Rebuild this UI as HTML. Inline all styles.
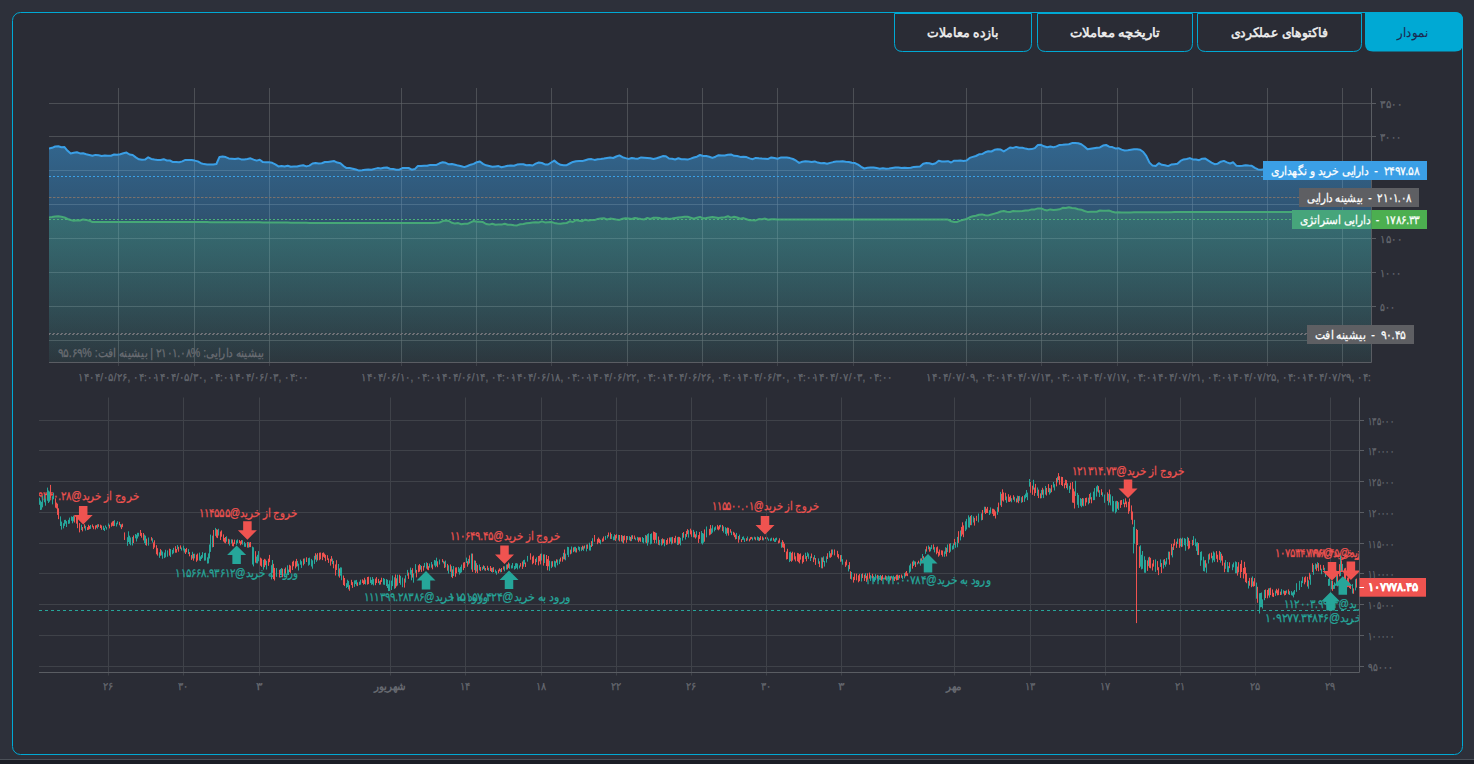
<!DOCTYPE html>
<html lang="fa"><head><meta charset="utf-8"><title>chart</title>
<style>
html,body{margin:0;padding:0;width:1474px;height:764px;overflow:hidden;background:#2d303a;}
body{position:relative;font-family:"Liberation Sans",sans-serif;}
svg{position:absolute;left:0;top:0;}
.t{position:absolute;white-space:nowrap;line-height:1;direction:rtl;unicode-bidi:plaintext;-webkit-text-stroke:0.25px currentColor;}
.clipb{position:absolute;left:39px;top:397px;width:1320px;height:275px;overflow:hidden;}
.clipt{position:absolute;left:0px;top:365px;width:1371px;height:25px;overflow:hidden;}
</style></head><body>
<svg width="1474" height="764" viewBox="0 0 1474 764">
<rect x="0" y="0" width="1474" height="764" fill="#2d303a"/>
<rect x="0" y="759" width="1474" height="1" fill="#4b5058"/>
<rect x="0" y="760" width="1474" height="4" fill="#1c1e26"/>
<rect x="12.5" y="12.5" width="1450" height="742" rx="8" ry="8" fill="#2a2c35" stroke="#00a9d4" stroke-width="1"/>
<path d="M894.5,13.5 V43.5 Q894.5,51.5 902.5,51.5 H1023.5 Q1031.5,51.5 1031.5,43.5 V13.5 Z" fill="#2a2c35" stroke="#00a9d4" stroke-width="1"/>
<path d="M1037.5,13.5 V43.5 Q1037.5,51.5 1045.5,51.5 H1184.5 Q1192.5,51.5 1192.5,43.5 V13.5 Z" fill="#2a2c35" stroke="#00a9d4" stroke-width="1"/>
<path d="M1197.5,13.5 V43.5 Q1197.5,51.5 1205.5,51.5 H1353.5 Q1361.5,51.5 1361.5,43.5 V13.5 Z" fill="#2a2c35" stroke="#00a9d4" stroke-width="1"/>
<path d="M1365,12 H1455 Q1463,12 1463,20 V43.5 Q1463,51.5 1455,51.5 H1373 Q1365,51.5 1365,43.5 V12 Z" fill="#00a9d4"/>
<defs><linearGradient id="gb" x1="0" y1="0" x2="0" y2="1" gradientUnits="objectBoundingBox"><stop offset="0" stop-color="#3a9fe6" stop-opacity="0.5"/><stop offset="1" stop-color="#3a9fe6" stop-opacity="0.03"/></linearGradient><linearGradient id="gg" x1="0" y1="0" x2="0" y2="1" gradientUnits="objectBoundingBox"><stop offset="0" stop-color="#48af78" stop-opacity="0.3"/><stop offset="1" stop-color="#48af78" stop-opacity="0.06"/></linearGradient><clipPath id="ctop"><rect x="49" y="88" width="1322.5" height="274"/></clipPath><clipPath id="cbot"><rect x="39" y="397" width="1320" height="275"/></clipPath></defs>
<line x1="49" y1="103.5" x2="1371.5" y2="103.5" stroke="#3f4249" stroke-width="1"/>
<line x1="49" y1="136.5" x2="1371.5" y2="136.5" stroke="#3f4249" stroke-width="1"/>
<line x1="49" y1="170.5" x2="1371.5" y2="170.5" stroke="#3f4249" stroke-width="1"/>
<line x1="49" y1="204.5" x2="1371.5" y2="204.5" stroke="#3f4249" stroke-width="1"/>
<line x1="49" y1="238.5" x2="1371.5" y2="238.5" stroke="#3f4249" stroke-width="1"/>
<line x1="49" y1="272.5" x2="1371.5" y2="272.5" stroke="#3f4249" stroke-width="1"/>
<line x1="49" y1="306.5" x2="1371.5" y2="306.5" stroke="#3f4249" stroke-width="1"/>
<line x1="49" y1="340.5" x2="1371.5" y2="340.5" stroke="#3f4249" stroke-width="1"/>
<line x1="118.5" y1="88" x2="118.5" y2="366.0" stroke="#3f4249" stroke-width="1"/>
<line x1="194.5" y1="88" x2="194.5" y2="366.0" stroke="#3f4249" stroke-width="1"/>
<line x1="269.5" y1="88" x2="269.5" y2="366.0" stroke="#3f4249" stroke-width="1"/>
<line x1="401.5" y1="88" x2="401.5" y2="366.0" stroke="#3f4249" stroke-width="1"/>
<line x1="476.5" y1="88" x2="476.5" y2="366.0" stroke="#3f4249" stroke-width="1"/>
<line x1="551.5" y1="88" x2="551.5" y2="366.0" stroke="#3f4249" stroke-width="1"/>
<line x1="627.5" y1="88" x2="627.5" y2="366.0" stroke="#3f4249" stroke-width="1"/>
<line x1="702.5" y1="88" x2="702.5" y2="366.0" stroke="#3f4249" stroke-width="1"/>
<line x1="777.5" y1="88" x2="777.5" y2="366.0" stroke="#3f4249" stroke-width="1"/>
<line x1="853.5" y1="88" x2="853.5" y2="366.0" stroke="#3f4249" stroke-width="1"/>
<line x1="966.5" y1="88" x2="966.5" y2="366.0" stroke="#3f4249" stroke-width="1"/>
<line x1="1041.5" y1="88" x2="1041.5" y2="366.0" stroke="#3f4249" stroke-width="1"/>
<line x1="1117.5" y1="88" x2="1117.5" y2="366.0" stroke="#3f4249" stroke-width="1"/>
<line x1="1192.5" y1="88" x2="1192.5" y2="366.0" stroke="#3f4249" stroke-width="1"/>
<line x1="1267.5" y1="88" x2="1267.5" y2="366.0" stroke="#3f4249" stroke-width="1"/>
<line x1="1342.5" y1="88" x2="1342.5" y2="366.0" stroke="#3f4249" stroke-width="1"/>
<g clip-path="url(#ctop)">
<polygon points="49.0,148.6 52.1,147.8 55.2,146.5 58.3,146.2 61.4,147.3 64.5,147.1 67.6,150.8 70.7,153.5 73.8,152.8 76.9,152.2 80.0,153.4 83.1,153.2 86.2,154.2 89.3,155.0 92.4,155.8 95.5,154.9 98.6,155.3 101.7,156.0 104.8,155.6 107.9,155.8 111.0,155.7 114.1,154.5 117.2,154.7 120.3,154.3 123.4,153.3 126.5,152.6 129.6,154.5 132.7,155.0 135.8,157.4 138.9,159.3 142.0,159.8 145.1,159.6 148.2,157.3 151.3,158.9 154.4,159.5 157.5,160.0 160.6,160.0 163.7,159.2 166.8,160.5 169.9,160.5 173.0,162.1 176.1,161.9 179.2,162.3 182.3,161.4 185.4,159.9 188.5,159.9 191.6,160.0 194.7,160.6 197.8,161.4 200.9,163.2 204.0,164.1 207.1,164.5 210.2,164.5 213.3,164.6 216.4,164.0 219.5,156.9 222.6,156.5 225.7,157.1 228.8,158.4 231.9,158.7 235.0,159.0 238.1,158.4 241.2,159.4 244.3,159.4 247.4,158.9 250.5,158.3 253.6,159.6 256.7,160.6 259.8,159.8 262.9,162.1 266.0,162.3 269.1,162.2 272.2,162.8 275.3,164.3 278.4,166.4 281.5,165.9 284.6,166.5 287.7,165.8 290.8,166.8 293.9,166.6 297.0,166.5 300.1,165.7 303.2,165.2 306.3,166.4 309.4,165.6 312.5,163.5 315.6,163.1 318.7,163.4 321.8,163.2 324.9,162.0 328.0,161.9 331.1,161.5 334.2,161.1 337.3,162.6 340.4,163.2 343.5,166.0 346.6,168.1 349.7,168.1 352.8,168.7 355.9,169.5 359.0,170.6 362.1,170.3 365.2,169.8 368.3,169.5 371.4,169.8 374.5,168.9 377.6,168.1 380.7,168.5 383.8,167.7 386.9,167.5 390.0,168.7 393.1,168.9 396.2,169.8 399.3,169.7 402.4,168.1 405.5,168.0 408.6,168.0 411.7,169.7 414.8,169.1 417.9,165.9 421.0,166.1 424.1,165.7 427.2,165.8 430.3,164.9 433.4,165.0 436.5,164.9 439.6,163.3 442.7,162.3 445.8,162.8 448.9,164.3 452.0,164.1 455.1,164.7 458.2,165.6 461.3,166.2 464.4,167.1 467.5,166.0 470.6,164.7 473.7,163.9 476.8,162.2 479.9,161.5 483.0,163.9 486.1,165.3 489.2,166.0 492.3,166.8 495.4,166.4 498.5,166.1 501.6,167.2 504.7,166.5 507.8,165.7 510.9,165.6 514.0,165.8 517.1,164.6 520.2,164.3 523.3,164.3 526.4,165.3 529.5,165.0 532.6,165.5 535.7,163.6 538.8,162.5 541.9,163.0 545.0,164.4 548.1,164.5 551.2,162.5 554.3,160.6 557.4,163.1 560.5,164.8 563.6,165.2 566.7,165.2 569.8,163.5 572.9,161.9 576.0,161.2 579.1,160.9 582.2,161.1 585.3,160.2 588.4,159.3 591.5,159.1 594.6,159.9 597.7,159.2 600.8,158.9 603.9,158.5 607.0,158.0 610.1,157.5 613.2,158.0 616.3,156.5 619.4,155.4 622.5,157.2 625.6,158.1 628.7,158.9 631.8,158.0 634.9,158.5 638.0,158.7 641.1,157.4 644.2,157.7 647.3,158.0 650.4,158.3 653.5,158.9 656.6,158.3 659.7,157.2 662.8,156.1 665.9,156.2 669.0,158.5 672.1,158.7 675.2,159.5 678.3,158.3 681.4,159.3 684.5,159.3 687.6,159.6 690.7,158.6 693.8,157.5 696.9,156.7 700.0,155.0 703.1,156.0 706.2,156.0 709.3,156.7 712.4,157.9 715.5,156.7 718.6,155.2 721.7,155.6 724.8,155.4 727.9,154.8 731.0,154.4 734.1,155.8 737.2,156.0 740.3,156.9 743.4,156.8 746.5,157.1 749.6,158.4 752.7,159.2 755.8,157.9 758.9,158.3 762.0,158.6 765.1,158.7 768.2,158.9 771.3,157.4 774.4,158.0 777.5,158.8 780.6,157.6 783.7,157.5 786.8,157.5 789.9,158.1 793.0,159.0 796.1,160.7 799.2,162.9 802.3,161.8 805.4,161.3 808.5,161.4 811.6,162.1 814.7,161.4 817.8,162.6 820.9,163.2 824.0,163.1 827.1,163.8 830.2,162.9 833.3,162.1 836.4,161.5 839.5,161.5 842.6,161.3 845.7,161.7 848.8,162.0 851.9,162.8 855.0,163.1 858.1,164.6 861.2,166.8 864.3,168.5 867.4,167.7 870.5,167.4 873.6,167.6 876.7,168.1 879.8,168.7 882.9,168.2 886.0,168.7 889.1,168.5 892.2,168.0 895.3,167.6 898.4,167.6 901.5,168.1 904.6,167.7 907.7,168.1 910.8,167.8 913.9,166.9 917.0,166.7 920.1,166.6 923.2,163.7 926.3,163.1 929.4,163.2 932.5,164.2 935.6,163.2 938.7,160.8 941.8,161.5 944.9,161.6 948.0,161.2 951.1,162.5 954.2,160.7 957.3,160.7 960.4,160.6 963.5,160.9 966.6,160.6 969.7,157.9 972.8,156.9 975.9,156.0 979.0,154.3 982.1,154.1 985.2,152.3 988.3,151.2 991.4,151.5 994.5,149.8 997.6,149.3 1000.7,149.6 1003.8,151.4 1006.9,149.5 1010.0,147.5 1013.1,147.9 1016.2,146.9 1019.3,147.8 1022.4,147.8 1025.5,148.6 1028.6,149.3 1031.7,149.1 1034.8,148.1 1037.9,145.0 1041.0,144.8 1044.1,146.3 1047.2,147.2 1050.3,146.5 1053.4,147.2 1056.5,146.4 1059.6,144.9 1062.7,144.8 1065.8,144.4 1068.9,144.3 1072.0,143.1 1075.1,143.0 1078.2,143.2 1081.3,144.3 1084.4,146.5 1087.5,149.3 1090.6,148.7 1093.7,148.2 1096.8,147.7 1099.9,147.4 1103.0,145.6 1106.1,145.0 1109.2,146.7 1112.3,147.1 1115.4,148.4 1118.5,148.2 1121.6,149.6 1124.7,150.5 1127.8,150.3 1130.9,149.8 1134.0,149.3 1137.1,149.3 1140.2,149.7 1143.3,152.0 1146.4,156.2 1149.5,162.6 1152.6,165.6 1155.7,165.9 1158.8,163.2 1161.9,164.8 1165.0,165.2 1168.1,166.1 1171.2,164.6 1174.3,164.2 1177.4,163.8 1180.5,160.9 1183.6,159.4 1186.7,159.0 1189.8,158.1 1192.9,159.4 1196.0,159.5 1199.1,160.2 1202.2,158.7 1205.3,158.6 1208.4,160.7 1211.5,162.6 1214.6,164.2 1217.7,163.7 1220.8,161.7 1223.9,160.9 1227.0,162.4 1230.1,163.5 1233.2,162.3 1236.3,165.7 1239.4,166.1 1242.5,165.8 1245.6,165.3 1248.7,165.6 1251.8,165.8 1254.9,167.8 1258.0,169.4 1261.1,169.8 1264.2,169.3 1267.3,169.3 1270.4,169.3 1273.5,169.4 1276.6,169.4 1279.7,169.4 1282.8,169.4 1285.9,169.4 1289.0,169.4 1292.1,169.5 1295.2,169.5 1298.3,169.5 1301.4,169.5 1304.5,169.5 1307.6,169.5 1310.7,169.5 1313.8,169.5 1316.9,169.5 1320.0,169.5 1323.1,169.5 1326.2,169.5 1329.3,169.5 1332.4,169.5 1335.5,169.5 1338.6,169.5 1341.7,169.5 1344.8,169.5 1347.9,169.5 1351.0,169.5 1354.1,169.5 1357.2,169.5 1360.3,169.5 1363.4,169.5 1366.5,169.5 1369.6,169.5 1371.0,169.5 1371.5,362.0 49.0,362.0" fill="url(#gb)"/>
<polygon points="49.0,217.6 52.1,217.1 55.2,216.4 58.3,216.2 61.4,216.7 64.5,217.5 67.6,219.0 70.7,220.0 73.8,220.7 76.9,220.3 80.0,220.5 83.1,219.4 86.2,219.9 89.3,220.7 92.4,222.0 95.5,222.0 98.6,222.0 101.7,222.0 104.8,222.0 107.9,222.0 111.0,222.0 114.1,222.0 117.2,222.0 120.3,222.0 123.4,222.0 126.5,222.0 129.6,222.0 132.7,222.1 135.8,222.1 138.9,222.1 142.0,222.1 145.1,222.1 148.2,222.1 151.3,222.1 154.4,222.1 157.5,222.1 160.6,222.1 163.7,222.1 166.8,222.1 169.9,222.1 173.0,222.1 176.1,222.1 179.2,222.1 182.3,222.1 185.4,222.1 188.5,222.1 191.6,222.1 194.7,222.1 197.8,222.1 200.9,222.1 204.0,222.1 207.1,222.1 210.2,222.2 213.3,222.2 216.4,222.2 219.5,222.2 222.6,222.2 225.7,222.2 228.8,222.2 231.9,222.2 235.0,222.2 238.1,222.2 241.2,222.2 244.3,222.2 247.4,222.2 250.5,222.2 253.6,222.3 256.7,222.3 259.8,222.3 262.9,222.4 266.0,222.4 269.1,222.4 272.2,222.5 275.3,222.5 278.4,222.5 281.5,222.6 284.6,222.6 287.7,222.6 290.8,222.7 293.9,222.7 297.0,222.7 300.1,222.8 303.2,222.8 306.3,222.8 309.4,222.9 312.5,222.9 315.6,223.0 318.7,223.0 321.8,223.0 324.9,223.0 328.0,223.0 331.1,223.0 334.2,223.0 337.3,223.0 340.4,223.0 343.5,223.0 346.6,223.0 349.7,223.0 352.8,223.0 355.9,223.0 359.0,223.0 362.1,223.0 365.2,223.0 368.3,223.0 371.4,223.0 374.5,223.0 377.6,223.0 380.7,223.0 383.8,223.0 386.9,223.0 390.0,223.0 393.1,223.0 396.2,223.0 399.3,223.0 402.4,223.0 405.5,223.0 408.6,223.0 411.7,223.0 414.8,223.0 417.9,223.0 421.0,223.0 424.1,223.0 427.2,223.0 430.3,223.0 433.4,223.0 436.5,222.7 439.6,222.5 442.7,221.1 445.8,220.6 448.9,221.0 452.0,222.8 455.1,223.6 458.2,223.1 461.3,224.3 464.4,223.8 467.5,223.8 470.6,222.3 473.7,221.0 476.8,221.7 479.9,221.7 483.0,222.1 486.1,224.0 489.2,224.6 492.3,223.7 495.4,224.7 498.5,224.4 501.6,224.6 504.7,223.7 507.8,224.7 510.9,224.8 514.0,225.3 517.1,225.4 520.2,224.3 523.3,223.9 526.4,223.3 529.5,222.9 532.6,222.5 535.7,222.3 538.8,222.5 541.9,221.4 545.0,222.4 548.1,222.2 551.2,222.0 554.3,222.9 557.4,223.4 560.5,223.7 563.6,223.2 566.7,223.0 569.8,221.3 572.9,222.0 576.0,220.1 579.1,220.7 582.2,221.2 585.3,219.7 588.4,220.5 591.5,220.0 594.6,220.1 597.7,218.9 600.8,218.4 603.9,218.2 607.0,219.5 610.1,218.6 613.2,219.1 616.3,219.6 619.4,219.9 622.5,218.8 625.6,218.3 628.7,218.4 631.8,219.0 634.9,217.9 638.0,218.6 641.1,219.1 644.2,219.4 647.3,217.9 650.4,219.0 653.5,217.8 656.6,217.7 659.7,218.1 662.8,219.0 665.9,218.2 669.0,219.0 672.1,218.6 675.2,218.0 678.3,217.6 681.4,217.2 684.5,216.8 687.6,216.7 690.7,217.7 693.8,218.8 696.9,217.7 700.0,216.9 703.1,218.3 706.2,218.1 709.3,217.6 712.4,217.1 715.5,217.4 718.6,218.0 721.7,217.6 724.8,217.2 727.9,216.2 731.0,217.6 734.1,216.8 737.2,217.5 740.3,218.7 743.4,218.1 746.5,219.2 749.6,220.3 752.7,220.2 755.8,220.4 758.9,219.1 762.0,219.2 765.1,218.6 768.2,219.8 771.3,219.2 774.4,219.3 777.5,219.5 780.6,219.5 783.7,219.6 786.8,219.6 789.9,219.6 793.0,219.6 796.1,219.6 799.2,219.6 802.3,219.6 805.4,219.6 808.5,219.6 811.6,219.6 814.7,219.6 817.8,219.6 820.9,219.6 824.0,219.6 827.1,219.6 830.2,219.6 833.3,219.6 836.4,219.6 839.5,219.6 842.6,219.6 845.7,219.6 848.8,219.6 851.9,219.6 855.0,219.6 858.1,219.6 861.2,219.6 864.3,219.6 867.4,219.6 870.5,219.6 873.6,219.6 876.7,219.6 879.8,219.6 882.9,219.6 886.0,219.6 889.1,219.6 892.2,219.6 895.3,219.6 898.4,219.6 901.5,219.6 904.6,219.6 907.7,219.6 910.8,219.6 913.9,219.6 917.0,219.6 920.1,219.6 923.2,219.6 926.3,219.6 929.4,219.6 932.5,219.6 935.6,219.6 938.7,219.6 941.8,219.6 944.9,219.6 948.0,219.6 951.1,221.3 954.2,222.0 957.3,221.9 960.4,220.6 963.5,219.7 966.6,219.0 969.7,217.3 972.8,216.3 975.9,215.7 979.0,214.7 982.1,214.4 985.2,215.3 988.3,215.4 991.4,214.5 994.5,213.6 997.6,212.7 1000.7,211.5 1003.8,211.1 1006.9,211.7 1010.0,212.0 1013.1,211.0 1016.2,211.2 1019.3,211.2 1022.4,210.9 1025.5,210.5 1028.6,210.4 1031.7,209.4 1034.8,209.4 1037.9,208.4 1041.0,208.4 1044.1,209.7 1047.2,210.4 1050.3,209.4 1053.4,210.1 1056.5,209.7 1059.6,209.3 1062.7,207.8 1065.8,208.0 1068.9,207.3 1072.0,208.0 1075.1,208.3 1078.2,209.3 1081.3,209.7 1084.4,211.0 1087.5,211.9 1090.6,211.8 1093.7,211.7 1096.8,211.7 1099.9,210.5 1103.0,210.7 1106.1,210.7 1109.2,210.6 1112.3,211.7 1115.4,212.5 1118.5,212.3 1121.6,212.5 1124.7,212.4 1127.8,212.4 1130.9,212.4 1134.0,212.3 1137.1,212.3 1140.2,212.3 1143.3,212.3 1146.4,212.3 1149.5,212.3 1152.6,212.2 1155.7,212.2 1158.8,212.2 1161.9,212.2 1165.0,212.2 1168.1,212.2 1171.2,212.2 1174.3,212.1 1177.4,212.1 1180.5,212.1 1183.6,212.1 1186.7,212.1 1189.8,212.1 1192.9,212.0 1196.0,212.0 1199.1,212.0 1202.2,212.0 1205.3,212.0 1208.4,212.0 1211.5,212.0 1214.6,212.0 1217.7,212.0 1220.8,212.0 1223.9,212.0 1227.0,212.0 1230.1,212.0 1233.2,212.0 1236.3,212.0 1239.4,212.0 1242.5,212.0 1245.6,211.9 1248.7,211.9 1251.8,211.9 1254.9,211.9 1258.0,211.9 1261.1,211.9 1264.2,211.9 1267.3,211.9 1270.4,211.9 1273.5,211.9 1276.6,211.9 1279.7,211.9 1282.8,211.9 1285.9,211.9 1289.0,211.9 1292.1,211.9 1295.2,211.9 1298.3,211.9 1301.4,211.9 1304.5,211.9 1307.6,211.9 1310.7,211.9 1313.8,211.9 1316.9,211.9 1320.0,211.9 1323.1,211.9 1326.2,211.9 1329.3,211.8 1332.4,211.8 1335.5,211.8 1338.6,211.8 1341.7,211.8 1344.8,211.8 1347.9,211.8 1351.0,211.8 1354.1,211.8 1357.2,211.8 1360.3,211.8 1363.4,211.8 1366.5,211.8 1369.6,211.8 1371.0,211.8 1371.5,362.0 49.0,362.0" fill="url(#gg)"/>
<line x1="49" y1="103.5" x2="1371.5" y2="103.5" stroke="#ffffff" stroke-opacity="0.07" stroke-width="1"/>
<line x1="49" y1="136.5" x2="1371.5" y2="136.5" stroke="#ffffff" stroke-opacity="0.07" stroke-width="1"/>
<line x1="49" y1="170.5" x2="1371.5" y2="170.5" stroke="#ffffff" stroke-opacity="0.07" stroke-width="1"/>
<line x1="49" y1="204.5" x2="1371.5" y2="204.5" stroke="#ffffff" stroke-opacity="0.07" stroke-width="1"/>
<line x1="49" y1="238.5" x2="1371.5" y2="238.5" stroke="#ffffff" stroke-opacity="0.07" stroke-width="1"/>
<line x1="49" y1="272.5" x2="1371.5" y2="272.5" stroke="#ffffff" stroke-opacity="0.07" stroke-width="1"/>
<line x1="49" y1="306.5" x2="1371.5" y2="306.5" stroke="#ffffff" stroke-opacity="0.07" stroke-width="1"/>
<line x1="49" y1="340.5" x2="1371.5" y2="340.5" stroke="#ffffff" stroke-opacity="0.07" stroke-width="1"/>
<line x1="118.5" y1="88" x2="118.5" y2="362.5" stroke="#ffffff" stroke-opacity="0.07" stroke-width="1"/>
<line x1="194.5" y1="88" x2="194.5" y2="362.5" stroke="#ffffff" stroke-opacity="0.07" stroke-width="1"/>
<line x1="269.5" y1="88" x2="269.5" y2="362.5" stroke="#ffffff" stroke-opacity="0.07" stroke-width="1"/>
<line x1="401.5" y1="88" x2="401.5" y2="362.5" stroke="#ffffff" stroke-opacity="0.07" stroke-width="1"/>
<line x1="476.5" y1="88" x2="476.5" y2="362.5" stroke="#ffffff" stroke-opacity="0.07" stroke-width="1"/>
<line x1="551.5" y1="88" x2="551.5" y2="362.5" stroke="#ffffff" stroke-opacity="0.07" stroke-width="1"/>
<line x1="627.5" y1="88" x2="627.5" y2="362.5" stroke="#ffffff" stroke-opacity="0.07" stroke-width="1"/>
<line x1="702.5" y1="88" x2="702.5" y2="362.5" stroke="#ffffff" stroke-opacity="0.07" stroke-width="1"/>
<line x1="777.5" y1="88" x2="777.5" y2="362.5" stroke="#ffffff" stroke-opacity="0.07" stroke-width="1"/>
<line x1="853.5" y1="88" x2="853.5" y2="362.5" stroke="#ffffff" stroke-opacity="0.07" stroke-width="1"/>
<line x1="966.5" y1="88" x2="966.5" y2="362.5" stroke="#ffffff" stroke-opacity="0.07" stroke-width="1"/>
<line x1="1041.5" y1="88" x2="1041.5" y2="362.5" stroke="#ffffff" stroke-opacity="0.07" stroke-width="1"/>
<line x1="1117.5" y1="88" x2="1117.5" y2="362.5" stroke="#ffffff" stroke-opacity="0.07" stroke-width="1"/>
<line x1="1192.5" y1="88" x2="1192.5" y2="362.5" stroke="#ffffff" stroke-opacity="0.07" stroke-width="1"/>
<line x1="1267.5" y1="88" x2="1267.5" y2="362.5" stroke="#ffffff" stroke-opacity="0.07" stroke-width="1"/>
<line x1="1342.5" y1="88" x2="1342.5" y2="362.5" stroke="#ffffff" stroke-opacity="0.07" stroke-width="1"/>
<polyline points="49.0,148.6 52.1,147.8 55.2,146.5 58.3,146.2 61.4,147.3 64.5,147.1 67.6,150.8 70.7,153.5 73.8,152.8 76.9,152.2 80.0,153.4 83.1,153.2 86.2,154.2 89.3,155.0 92.4,155.8 95.5,154.9 98.6,155.3 101.7,156.0 104.8,155.6 107.9,155.8 111.0,155.7 114.1,154.5 117.2,154.7 120.3,154.3 123.4,153.3 126.5,152.6 129.6,154.5 132.7,155.0 135.8,157.4 138.9,159.3 142.0,159.8 145.1,159.6 148.2,157.3 151.3,158.9 154.4,159.5 157.5,160.0 160.6,160.0 163.7,159.2 166.8,160.5 169.9,160.5 173.0,162.1 176.1,161.9 179.2,162.3 182.3,161.4 185.4,159.9 188.5,159.9 191.6,160.0 194.7,160.6 197.8,161.4 200.9,163.2 204.0,164.1 207.1,164.5 210.2,164.5 213.3,164.6 216.4,164.0 219.5,156.9 222.6,156.5 225.7,157.1 228.8,158.4 231.9,158.7 235.0,159.0 238.1,158.4 241.2,159.4 244.3,159.4 247.4,158.9 250.5,158.3 253.6,159.6 256.7,160.6 259.8,159.8 262.9,162.1 266.0,162.3 269.1,162.2 272.2,162.8 275.3,164.3 278.4,166.4 281.5,165.9 284.6,166.5 287.7,165.8 290.8,166.8 293.9,166.6 297.0,166.5 300.1,165.7 303.2,165.2 306.3,166.4 309.4,165.6 312.5,163.5 315.6,163.1 318.7,163.4 321.8,163.2 324.9,162.0 328.0,161.9 331.1,161.5 334.2,161.1 337.3,162.6 340.4,163.2 343.5,166.0 346.6,168.1 349.7,168.1 352.8,168.7 355.9,169.5 359.0,170.6 362.1,170.3 365.2,169.8 368.3,169.5 371.4,169.8 374.5,168.9 377.6,168.1 380.7,168.5 383.8,167.7 386.9,167.5 390.0,168.7 393.1,168.9 396.2,169.8 399.3,169.7 402.4,168.1 405.5,168.0 408.6,168.0 411.7,169.7 414.8,169.1 417.9,165.9 421.0,166.1 424.1,165.7 427.2,165.8 430.3,164.9 433.4,165.0 436.5,164.9 439.6,163.3 442.7,162.3 445.8,162.8 448.9,164.3 452.0,164.1 455.1,164.7 458.2,165.6 461.3,166.2 464.4,167.1 467.5,166.0 470.6,164.7 473.7,163.9 476.8,162.2 479.9,161.5 483.0,163.9 486.1,165.3 489.2,166.0 492.3,166.8 495.4,166.4 498.5,166.1 501.6,167.2 504.7,166.5 507.8,165.7 510.9,165.6 514.0,165.8 517.1,164.6 520.2,164.3 523.3,164.3 526.4,165.3 529.5,165.0 532.6,165.5 535.7,163.6 538.8,162.5 541.9,163.0 545.0,164.4 548.1,164.5 551.2,162.5 554.3,160.6 557.4,163.1 560.5,164.8 563.6,165.2 566.7,165.2 569.8,163.5 572.9,161.9 576.0,161.2 579.1,160.9 582.2,161.1 585.3,160.2 588.4,159.3 591.5,159.1 594.6,159.9 597.7,159.2 600.8,158.9 603.9,158.5 607.0,158.0 610.1,157.5 613.2,158.0 616.3,156.5 619.4,155.4 622.5,157.2 625.6,158.1 628.7,158.9 631.8,158.0 634.9,158.5 638.0,158.7 641.1,157.4 644.2,157.7 647.3,158.0 650.4,158.3 653.5,158.9 656.6,158.3 659.7,157.2 662.8,156.1 665.9,156.2 669.0,158.5 672.1,158.7 675.2,159.5 678.3,158.3 681.4,159.3 684.5,159.3 687.6,159.6 690.7,158.6 693.8,157.5 696.9,156.7 700.0,155.0 703.1,156.0 706.2,156.0 709.3,156.7 712.4,157.9 715.5,156.7 718.6,155.2 721.7,155.6 724.8,155.4 727.9,154.8 731.0,154.4 734.1,155.8 737.2,156.0 740.3,156.9 743.4,156.8 746.5,157.1 749.6,158.4 752.7,159.2 755.8,157.9 758.9,158.3 762.0,158.6 765.1,158.7 768.2,158.9 771.3,157.4 774.4,158.0 777.5,158.8 780.6,157.6 783.7,157.5 786.8,157.5 789.9,158.1 793.0,159.0 796.1,160.7 799.2,162.9 802.3,161.8 805.4,161.3 808.5,161.4 811.6,162.1 814.7,161.4 817.8,162.6 820.9,163.2 824.0,163.1 827.1,163.8 830.2,162.9 833.3,162.1 836.4,161.5 839.5,161.5 842.6,161.3 845.7,161.7 848.8,162.0 851.9,162.8 855.0,163.1 858.1,164.6 861.2,166.8 864.3,168.5 867.4,167.7 870.5,167.4 873.6,167.6 876.7,168.1 879.8,168.7 882.9,168.2 886.0,168.7 889.1,168.5 892.2,168.0 895.3,167.6 898.4,167.6 901.5,168.1 904.6,167.7 907.7,168.1 910.8,167.8 913.9,166.9 917.0,166.7 920.1,166.6 923.2,163.7 926.3,163.1 929.4,163.2 932.5,164.2 935.6,163.2 938.7,160.8 941.8,161.5 944.9,161.6 948.0,161.2 951.1,162.5 954.2,160.7 957.3,160.7 960.4,160.6 963.5,160.9 966.6,160.6 969.7,157.9 972.8,156.9 975.9,156.0 979.0,154.3 982.1,154.1 985.2,152.3 988.3,151.2 991.4,151.5 994.5,149.8 997.6,149.3 1000.7,149.6 1003.8,151.4 1006.9,149.5 1010.0,147.5 1013.1,147.9 1016.2,146.9 1019.3,147.8 1022.4,147.8 1025.5,148.6 1028.6,149.3 1031.7,149.1 1034.8,148.1 1037.9,145.0 1041.0,144.8 1044.1,146.3 1047.2,147.2 1050.3,146.5 1053.4,147.2 1056.5,146.4 1059.6,144.9 1062.7,144.8 1065.8,144.4 1068.9,144.3 1072.0,143.1 1075.1,143.0 1078.2,143.2 1081.3,144.3 1084.4,146.5 1087.5,149.3 1090.6,148.7 1093.7,148.2 1096.8,147.7 1099.9,147.4 1103.0,145.6 1106.1,145.0 1109.2,146.7 1112.3,147.1 1115.4,148.4 1118.5,148.2 1121.6,149.6 1124.7,150.5 1127.8,150.3 1130.9,149.8 1134.0,149.3 1137.1,149.3 1140.2,149.7 1143.3,152.0 1146.4,156.2 1149.5,162.6 1152.6,165.6 1155.7,165.9 1158.8,163.2 1161.9,164.8 1165.0,165.2 1168.1,166.1 1171.2,164.6 1174.3,164.2 1177.4,163.8 1180.5,160.9 1183.6,159.4 1186.7,159.0 1189.8,158.1 1192.9,159.4 1196.0,159.5 1199.1,160.2 1202.2,158.7 1205.3,158.6 1208.4,160.7 1211.5,162.6 1214.6,164.2 1217.7,163.7 1220.8,161.7 1223.9,160.9 1227.0,162.4 1230.1,163.5 1233.2,162.3 1236.3,165.7 1239.4,166.1 1242.5,165.8 1245.6,165.3 1248.7,165.6 1251.8,165.8 1254.9,167.8 1258.0,169.4 1261.1,169.8 1264.2,169.3 1267.3,169.3 1270.4,169.3 1273.5,169.4 1276.6,169.4 1279.7,169.4 1282.8,169.4 1285.9,169.4 1289.0,169.4 1292.1,169.5 1295.2,169.5 1298.3,169.5 1301.4,169.5 1304.5,169.5 1307.6,169.5 1310.7,169.5 1313.8,169.5 1316.9,169.5 1320.0,169.5 1323.1,169.5 1326.2,169.5 1329.3,169.5 1332.4,169.5 1335.5,169.5 1338.6,169.5 1341.7,169.5 1344.8,169.5 1347.9,169.5 1351.0,169.5 1354.1,169.5 1357.2,169.5 1360.3,169.5 1363.4,169.5 1366.5,169.5 1369.6,169.5 1371.0,169.5" fill="none" stroke="#3a9fe6" stroke-width="2" stroke-linejoin="round"/>
<polyline points="49.0,217.6 52.1,217.1 55.2,216.4 58.3,216.2 61.4,216.7 64.5,217.5 67.6,219.0 70.7,220.0 73.8,220.7 76.9,220.3 80.0,220.5 83.1,219.4 86.2,219.9 89.3,220.7 92.4,222.0 95.5,222.0 98.6,222.0 101.7,222.0 104.8,222.0 107.9,222.0 111.0,222.0 114.1,222.0 117.2,222.0 120.3,222.0 123.4,222.0 126.5,222.0 129.6,222.0 132.7,222.1 135.8,222.1 138.9,222.1 142.0,222.1 145.1,222.1 148.2,222.1 151.3,222.1 154.4,222.1 157.5,222.1 160.6,222.1 163.7,222.1 166.8,222.1 169.9,222.1 173.0,222.1 176.1,222.1 179.2,222.1 182.3,222.1 185.4,222.1 188.5,222.1 191.6,222.1 194.7,222.1 197.8,222.1 200.9,222.1 204.0,222.1 207.1,222.1 210.2,222.2 213.3,222.2 216.4,222.2 219.5,222.2 222.6,222.2 225.7,222.2 228.8,222.2 231.9,222.2 235.0,222.2 238.1,222.2 241.2,222.2 244.3,222.2 247.4,222.2 250.5,222.2 253.6,222.3 256.7,222.3 259.8,222.3 262.9,222.4 266.0,222.4 269.1,222.4 272.2,222.5 275.3,222.5 278.4,222.5 281.5,222.6 284.6,222.6 287.7,222.6 290.8,222.7 293.9,222.7 297.0,222.7 300.1,222.8 303.2,222.8 306.3,222.8 309.4,222.9 312.5,222.9 315.6,223.0 318.7,223.0 321.8,223.0 324.9,223.0 328.0,223.0 331.1,223.0 334.2,223.0 337.3,223.0 340.4,223.0 343.5,223.0 346.6,223.0 349.7,223.0 352.8,223.0 355.9,223.0 359.0,223.0 362.1,223.0 365.2,223.0 368.3,223.0 371.4,223.0 374.5,223.0 377.6,223.0 380.7,223.0 383.8,223.0 386.9,223.0 390.0,223.0 393.1,223.0 396.2,223.0 399.3,223.0 402.4,223.0 405.5,223.0 408.6,223.0 411.7,223.0 414.8,223.0 417.9,223.0 421.0,223.0 424.1,223.0 427.2,223.0 430.3,223.0 433.4,223.0 436.5,222.7 439.6,222.5 442.7,221.1 445.8,220.6 448.9,221.0 452.0,222.8 455.1,223.6 458.2,223.1 461.3,224.3 464.4,223.8 467.5,223.8 470.6,222.3 473.7,221.0 476.8,221.7 479.9,221.7 483.0,222.1 486.1,224.0 489.2,224.6 492.3,223.7 495.4,224.7 498.5,224.4 501.6,224.6 504.7,223.7 507.8,224.7 510.9,224.8 514.0,225.3 517.1,225.4 520.2,224.3 523.3,223.9 526.4,223.3 529.5,222.9 532.6,222.5 535.7,222.3 538.8,222.5 541.9,221.4 545.0,222.4 548.1,222.2 551.2,222.0 554.3,222.9 557.4,223.4 560.5,223.7 563.6,223.2 566.7,223.0 569.8,221.3 572.9,222.0 576.0,220.1 579.1,220.7 582.2,221.2 585.3,219.7 588.4,220.5 591.5,220.0 594.6,220.1 597.7,218.9 600.8,218.4 603.9,218.2 607.0,219.5 610.1,218.6 613.2,219.1 616.3,219.6 619.4,219.9 622.5,218.8 625.6,218.3 628.7,218.4 631.8,219.0 634.9,217.9 638.0,218.6 641.1,219.1 644.2,219.4 647.3,217.9 650.4,219.0 653.5,217.8 656.6,217.7 659.7,218.1 662.8,219.0 665.9,218.2 669.0,219.0 672.1,218.6 675.2,218.0 678.3,217.6 681.4,217.2 684.5,216.8 687.6,216.7 690.7,217.7 693.8,218.8 696.9,217.7 700.0,216.9 703.1,218.3 706.2,218.1 709.3,217.6 712.4,217.1 715.5,217.4 718.6,218.0 721.7,217.6 724.8,217.2 727.9,216.2 731.0,217.6 734.1,216.8 737.2,217.5 740.3,218.7 743.4,218.1 746.5,219.2 749.6,220.3 752.7,220.2 755.8,220.4 758.9,219.1 762.0,219.2 765.1,218.6 768.2,219.8 771.3,219.2 774.4,219.3 777.5,219.5 780.6,219.5 783.7,219.6 786.8,219.6 789.9,219.6 793.0,219.6 796.1,219.6 799.2,219.6 802.3,219.6 805.4,219.6 808.5,219.6 811.6,219.6 814.7,219.6 817.8,219.6 820.9,219.6 824.0,219.6 827.1,219.6 830.2,219.6 833.3,219.6 836.4,219.6 839.5,219.6 842.6,219.6 845.7,219.6 848.8,219.6 851.9,219.6 855.0,219.6 858.1,219.6 861.2,219.6 864.3,219.6 867.4,219.6 870.5,219.6 873.6,219.6 876.7,219.6 879.8,219.6 882.9,219.6 886.0,219.6 889.1,219.6 892.2,219.6 895.3,219.6 898.4,219.6 901.5,219.6 904.6,219.6 907.7,219.6 910.8,219.6 913.9,219.6 917.0,219.6 920.1,219.6 923.2,219.6 926.3,219.6 929.4,219.6 932.5,219.6 935.6,219.6 938.7,219.6 941.8,219.6 944.9,219.6 948.0,219.6 951.1,221.3 954.2,222.0 957.3,221.9 960.4,220.6 963.5,219.7 966.6,219.0 969.7,217.3 972.8,216.3 975.9,215.7 979.0,214.7 982.1,214.4 985.2,215.3 988.3,215.4 991.4,214.5 994.5,213.6 997.6,212.7 1000.7,211.5 1003.8,211.1 1006.9,211.7 1010.0,212.0 1013.1,211.0 1016.2,211.2 1019.3,211.2 1022.4,210.9 1025.5,210.5 1028.6,210.4 1031.7,209.4 1034.8,209.4 1037.9,208.4 1041.0,208.4 1044.1,209.7 1047.2,210.4 1050.3,209.4 1053.4,210.1 1056.5,209.7 1059.6,209.3 1062.7,207.8 1065.8,208.0 1068.9,207.3 1072.0,208.0 1075.1,208.3 1078.2,209.3 1081.3,209.7 1084.4,211.0 1087.5,211.9 1090.6,211.8 1093.7,211.7 1096.8,211.7 1099.9,210.5 1103.0,210.7 1106.1,210.7 1109.2,210.6 1112.3,211.7 1115.4,212.5 1118.5,212.3 1121.6,212.5 1124.7,212.4 1127.8,212.4 1130.9,212.4 1134.0,212.3 1137.1,212.3 1140.2,212.3 1143.3,212.3 1146.4,212.3 1149.5,212.3 1152.6,212.2 1155.7,212.2 1158.8,212.2 1161.9,212.2 1165.0,212.2 1168.1,212.2 1171.2,212.2 1174.3,212.1 1177.4,212.1 1180.5,212.1 1183.6,212.1 1186.7,212.1 1189.8,212.1 1192.9,212.0 1196.0,212.0 1199.1,212.0 1202.2,212.0 1205.3,212.0 1208.4,212.0 1211.5,212.0 1214.6,212.0 1217.7,212.0 1220.8,212.0 1223.9,212.0 1227.0,212.0 1230.1,212.0 1233.2,212.0 1236.3,212.0 1239.4,212.0 1242.5,212.0 1245.6,211.9 1248.7,211.9 1251.8,211.9 1254.9,211.9 1258.0,211.9 1261.1,211.9 1264.2,211.9 1267.3,211.9 1270.4,211.9 1273.5,211.9 1276.6,211.9 1279.7,211.9 1282.8,211.9 1285.9,211.9 1289.0,211.9 1292.1,211.9 1295.2,211.9 1298.3,211.9 1301.4,211.9 1304.5,211.9 1307.6,211.9 1310.7,211.9 1313.8,211.9 1316.9,211.9 1320.0,211.9 1323.1,211.9 1326.2,211.9 1329.3,211.8 1332.4,211.8 1335.5,211.8 1338.6,211.8 1341.7,211.8 1344.8,211.8 1347.9,211.8 1351.0,211.8 1354.1,211.8 1357.2,211.8 1360.3,211.8 1363.4,211.8 1366.5,211.8 1369.6,211.8 1371.0,211.8" fill="none" stroke="#46a877" stroke-width="2" stroke-linejoin="round"/>
<line x1="49" y1="176.5" x2="1371" y2="176.5" stroke="#3aa0e8" stroke-width="1" stroke-dasharray="2 2"/>
<line x1="49" y1="197.5" x2="1371" y2="197.5" stroke="#7a716c" stroke-width="1" stroke-dasharray="2.5 1.5"/>
<line x1="49" y1="219.5" x2="1371" y2="219.5" stroke="#4cb07a" stroke-width="1" stroke-dasharray="2 2"/>
<pattern id="hatch" x="0" y="333" width="4" height="2" patternUnits="userSpaceOnUse"><rect x="0" y="1" width="2" height="1" fill="#6f7177"/><rect x="1" y="0" width="2" height="1" fill="#6f7177"/></pattern>
<rect x="49" y="333" width="1322" height="2" fill="url(#hatch)"/>
</g>
<line x1="49" y1="362.5" x2="1371.5" y2="362.5" stroke="#5a5d63" stroke-width="1"/>
<line x1="1371.5" y1="88" x2="1371.5" y2="362.5" stroke="#5a5d63" stroke-width="1"/>
<line x1="1371.5" y1="103.5" x2="1376" y2="103.5" stroke="#5a5d63" stroke-width="1"/>
<line x1="1371.5" y1="136.5" x2="1376" y2="136.5" stroke="#5a5d63" stroke-width="1"/>
<line x1="1371.5" y1="170.5" x2="1376" y2="170.5" stroke="#5a5d63" stroke-width="1"/>
<line x1="1371.5" y1="204.5" x2="1376" y2="204.5" stroke="#5a5d63" stroke-width="1"/>
<line x1="1371.5" y1="238.5" x2="1376" y2="238.5" stroke="#5a5d63" stroke-width="1"/>
<line x1="1371.5" y1="272.5" x2="1376" y2="272.5" stroke="#5a5d63" stroke-width="1"/>
<line x1="1371.5" y1="306.5" x2="1376" y2="306.5" stroke="#5a5d63" stroke-width="1"/>
<line x1="1371.5" y1="340.5" x2="1376" y2="340.5" stroke="#5a5d63" stroke-width="1"/>
<line x1="39" y1="420.5" x2="1359" y2="420.5" stroke="#3f4249" stroke-width="1"/>
<line x1="39" y1="450.5" x2="1359" y2="450.5" stroke="#3f4249" stroke-width="1"/>
<line x1="39" y1="481.5" x2="1359" y2="481.5" stroke="#3f4249" stroke-width="1"/>
<line x1="39" y1="512.5" x2="1359" y2="512.5" stroke="#3f4249" stroke-width="1"/>
<line x1="39" y1="543.5" x2="1359" y2="543.5" stroke="#3f4249" stroke-width="1"/>
<line x1="39" y1="573.5" x2="1359" y2="573.5" stroke="#3f4249" stroke-width="1"/>
<line x1="39" y1="604.5" x2="1359" y2="604.5" stroke="#3f4249" stroke-width="1"/>
<line x1="39" y1="635.5" x2="1359" y2="635.5" stroke="#3f4249" stroke-width="1"/>
<line x1="39" y1="666.5" x2="1359" y2="666.5" stroke="#3f4249" stroke-width="1"/>
<line x1="108.5" y1="397.5" x2="108.5" y2="675.5" stroke="#3f4249" stroke-width="1"/>
<line x1="183.5" y1="397.5" x2="183.5" y2="675.5" stroke="#3f4249" stroke-width="1"/>
<line x1="259.5" y1="397.5" x2="259.5" y2="675.5" stroke="#3f4249" stroke-width="1"/>
<line x1="390.5" y1="397.5" x2="390.5" y2="675.5" stroke="#3f4249" stroke-width="1"/>
<line x1="465.5" y1="397.5" x2="465.5" y2="675.5" stroke="#3f4249" stroke-width="1"/>
<line x1="541.5" y1="397.5" x2="541.5" y2="675.5" stroke="#3f4249" stroke-width="1"/>
<line x1="616.5" y1="397.5" x2="616.5" y2="675.5" stroke="#3f4249" stroke-width="1"/>
<line x1="691.5" y1="397.5" x2="691.5" y2="675.5" stroke="#3f4249" stroke-width="1"/>
<line x1="766.5" y1="397.5" x2="766.5" y2="675.5" stroke="#3f4249" stroke-width="1"/>
<line x1="841.5" y1="397.5" x2="841.5" y2="675.5" stroke="#3f4249" stroke-width="1"/>
<line x1="954.5" y1="397.5" x2="954.5" y2="675.5" stroke="#3f4249" stroke-width="1"/>
<line x1="1030.5" y1="397.5" x2="1030.5" y2="675.5" stroke="#3f4249" stroke-width="1"/>
<line x1="1105.5" y1="397.5" x2="1105.5" y2="675.5" stroke="#3f4249" stroke-width="1"/>
<line x1="1180.5" y1="397.5" x2="1180.5" y2="675.5" stroke="#3f4249" stroke-width="1"/>
<line x1="1255.5" y1="397.5" x2="1255.5" y2="675.5" stroke="#3f4249" stroke-width="1"/>
<line x1="1330.5" y1="397.5" x2="1330.5" y2="675.5" stroke="#3f4249" stroke-width="1"/>
<line x1="39" y1="672.5" x2="1359.5" y2="672.5" stroke="#5a5d63" stroke-width="1"/>
<line x1="1359.5" y1="397.5" x2="1359.5" y2="672.5" stroke="#5a5d63" stroke-width="1"/>
<line x1="1359.5" y1="420.5" x2="1364" y2="420.5" stroke="#5a5d63" stroke-width="1"/>
<line x1="1359.5" y1="450.5" x2="1364" y2="450.5" stroke="#5a5d63" stroke-width="1"/>
<line x1="1359.5" y1="481.5" x2="1364" y2="481.5" stroke="#5a5d63" stroke-width="1"/>
<line x1="1359.5" y1="512.5" x2="1364" y2="512.5" stroke="#5a5d63" stroke-width="1"/>
<line x1="1359.5" y1="543.5" x2="1364" y2="543.5" stroke="#5a5d63" stroke-width="1"/>
<line x1="1359.5" y1="573.5" x2="1364" y2="573.5" stroke="#5a5d63" stroke-width="1"/>
<line x1="1359.5" y1="604.5" x2="1364" y2="604.5" stroke="#5a5d63" stroke-width="1"/>
<line x1="1359.5" y1="635.5" x2="1364" y2="635.5" stroke="#5a5d63" stroke-width="1"/>
<line x1="1359.5" y1="666.5" x2="1364" y2="666.5" stroke="#5a5d63" stroke-width="1"/>
<line x1="39" y1="610.5" x2="1359" y2="610.5" stroke="#26a69a" stroke-width="1" stroke-dasharray="3 3"/>
<rect x="1359.5" y="578" width="66.5" height="18.7" fill="#ef5350"/>
<line x1="1359.5" y1="587.5" x2="1364" y2="587.5" stroke="#ffffff" stroke-width="1"/>
<rect x="1263" y="161" width="164" height="19" fill="#3b9fe6"/>
<rect x="1299" y="188" width="120" height="19" fill="#5e5f63"/>
<rect x="1292" y="210" width="79.5" height="19" fill="#46a57b"/>
<rect x="1371.5" y="210" width="55.5" height="19" fill="#4caf50"/>
<rect x="1307" y="325" width="107" height="19" fill="#5e5f63"/>
</svg>
<div class="t" id="tab1" style="left:1413.4px;top:32.0px;font-size:13px;color:#1c2850;font-weight:normal;transform:translate(-50%,-50%) scaleX(0.8971);transform-origin:center center;-webkit-text-stroke:0.1px currentColor;">نمودار</div>
<div class="t" id="tab2" style="left:1278.7px;top:32.0px;font-size:13px;color:#f0f0f0;font-weight:normal;transform:translate(-50%,-50%) scaleX(0.9510);transform-origin:center center;-webkit-text-stroke:0.5px currentColor;">فاکتوهای عملکردی</div>
<div class="t" id="tab3" style="left:1114.8px;top:32.0px;font-size:13px;color:#f0f0f0;font-weight:normal;transform:translate(-50%,-50%) scaleX(1.0169);transform-origin:center center;-webkit-text-stroke:0.5px currentColor;">تاریخچه معاملات</div>
<div class="t" id="tab4" style="left:963.2px;top:32.0px;font-size:13px;color:#f0f0f0;font-weight:normal;transform:translate(-50%,-50%) scaleX(0.9560);transform-origin:center center;-webkit-text-stroke:0.5px currentColor;">بازده معاملات</div>
<div class="t" id="ya1" style="left:1380.0px;top:103.7px;font-size:11px;color:#666970;font-weight:normal;transform:translateY(-50%) scaleX(0.9167);transform-origin:left center;">۳۵۰۰</div>
<div class="t" id="ya2" style="left:1380.0px;top:136.5px;font-size:11px;color:#666970;font-weight:normal;transform:translateY(-50%) scaleX(0.8750);transform-origin:left center;">۳۰۰۰</div>
<div class="t" id="ya5" style="left:1380.0px;top:238.5px;font-size:11px;color:#666970;font-weight:normal;transform:translateY(-50%) scaleX(0.9167);transform-origin:left center;">۱۵۰۰</div>
<div class="t" id="ya6" style="left:1380.0px;top:272.5px;font-size:11px;color:#666970;font-weight:normal;transform:translateY(-50%) scaleX(0.8750);transform-origin:left center;">۱۰۰۰</div>
<div class="t" id="ya7" style="left:1380.0px;top:306.5px;font-size:11px;color:#666970;font-weight:normal;transform:translateY(-50%) scaleX(0.8333);transform-origin:left center;">۵۰۰</div>
<div class="t" id="yb1" style="left:1368.0px;top:420.5px;font-size:11px;color:#666970;font-weight:normal;transform:translateY(-50%) scaleX(0.7222);transform-origin:left center;">۱۳۵۰۰۰</div>
<div class="t" id="yb2" style="left:1368.0px;top:450.5px;font-size:11px;color:#666970;font-weight:normal;transform:translateY(-50%) scaleX(0.7222);transform-origin:left center;">۱۳۰۰۰۰</div>
<div class="t" id="yb3" style="left:1368.0px;top:481.5px;font-size:11px;color:#666970;font-weight:normal;transform:translateY(-50%) scaleX(0.7222);transform-origin:left center;">۱۲۵۰۰۰</div>
<div class="t" id="yb4" style="left:1368.0px;top:512.5px;font-size:11px;color:#666970;font-weight:normal;transform:translateY(-50%) scaleX(0.7222);transform-origin:left center;">۱۲۰۰۰۰</div>
<div class="t" id="yb5" style="left:1368.0px;top:543.5px;font-size:11px;color:#666970;font-weight:normal;transform:translateY(-50%) scaleX(0.7222);transform-origin:left center;">۱۱۵۰۰۰</div>
<div class="t" id="yb6" style="left:1368.0px;top:573.5px;font-size:11px;color:#666970;font-weight:normal;transform:translateY(-50%) scaleX(0.7222);transform-origin:left center;">۱۱۰۰۰۰</div>
<div class="t" id="yb7" style="left:1368.0px;top:604.5px;font-size:11px;color:#666970;font-weight:normal;transform:translateY(-50%) scaleX(0.7222);transform-origin:left center;">۱۰۵۰۰۰</div>
<div class="t" id="yb8" style="left:1368.0px;top:635.5px;font-size:11px;color:#666970;font-weight:normal;transform:translateY(-50%) scaleX(0.7222);transform-origin:left center;">۱۰۰۰۰۰</div>
<div class="t" id="yb9" style="left:1368.0px;top:666.5px;font-size:11px;color:#666970;font-weight:normal;transform:translateY(-50%) scaleX(0.8167);transform-origin:left center;">۹۵۰۰۰</div>
<div class="t" id="xb0" style="left:108.0px;top:685.5px;font-size:11px;color:#666970;font-weight:normal;transform:translate(-50%,-50%) scaleX(0.8833);transform-origin:center center;">۲۶</div>
<div class="t" id="xb1" style="left:183.0px;top:685.5px;font-size:11px;color:#666970;font-weight:normal;transform:translate(-50%,-50%) scaleX(0.8833);transform-origin:center center;">۳۰</div>
<div class="t" id="xb2" style="left:259.0px;top:685.5px;font-size:11px;color:#666970;font-weight:normal;transform:translate(-50%,-50%) scaleX(1.1000);transform-origin:center center;">۳</div>
<div class="t" id="xb3" style="left:390.0px;top:685.5px;font-size:11px;color:#666970;font-weight:bold;transform:translate(-50%,-50%) scaleX(0.9353);transform-origin:center center;-webkit-text-stroke:0;">شهریور</div>
<div class="t" id="xb4" style="left:465.0px;top:685.5px;font-size:11px;color:#666970;font-weight:normal;transform:translate(-50%,-50%) scaleX(0.8833);transform-origin:center center;">۱۴</div>
<div class="t" id="xb5" style="left:541.0px;top:685.5px;font-size:11px;color:#666970;font-weight:normal;transform:translate(-50%,-50%) scaleX(0.8833);transform-origin:center center;">۱۸</div>
<div class="t" id="xb6" style="left:616.0px;top:685.5px;font-size:11px;color:#666970;font-weight:normal;transform:translate(-50%,-50%) scaleX(0.8833);transform-origin:center center;">۲۲</div>
<div class="t" id="xb7" style="left:691.0px;top:685.5px;font-size:11px;color:#666970;font-weight:normal;transform:translate(-50%,-50%) scaleX(0.8833);transform-origin:center center;">۲۶</div>
<div class="t" id="xb8" style="left:766.0px;top:685.5px;font-size:11px;color:#666970;font-weight:normal;transform:translate(-50%,-50%) scaleX(0.8833);transform-origin:center center;">۳۰</div>
<div class="t" id="xb9" style="left:841.0px;top:685.5px;font-size:11px;color:#666970;font-weight:normal;transform:translate(-50%,-50%) scaleX(1.1000);transform-origin:center center;">۳</div>
<div class="t" id="xb10" style="left:954.0px;top:685.5px;font-size:11px;color:#666970;font-weight:bold;transform:translate(-50%,-50%) scaleX(0.9235);transform-origin:center center;-webkit-text-stroke:0;">مهر</div>
<div class="t" id="xb11" style="left:1030.0px;top:685.5px;font-size:11px;color:#666970;font-weight:normal;transform:translate(-50%,-50%) scaleX(0.8833);transform-origin:center center;">۱۳</div>
<div class="t" id="xb12" style="left:1105.0px;top:685.5px;font-size:11px;color:#666970;font-weight:normal;transform:translate(-50%,-50%) scaleX(0.8833);transform-origin:center center;">۱۷</div>
<div class="t" id="xb13" style="left:1180.0px;top:685.5px;font-size:11px;color:#666970;font-weight:normal;transform:translate(-50%,-50%) scaleX(0.8833);transform-origin:center center;">۲۱</div>
<div class="t" id="xb14" style="left:1255.0px;top:685.5px;font-size:11px;color:#666970;font-weight:normal;transform:translate(-50%,-50%) scaleX(0.8833);transform-origin:center center;">۲۵</div>
<div class="t" id="xb15" style="left:1330.0px;top:685.5px;font-size:11px;color:#666970;font-weight:normal;transform:translate(-50%,-50%) scaleX(0.8833);transform-origin:center center;">۲۹</div>
<div class="t" id="lb1" style="left:1345.2px;top:170.5px;font-size:12px;color:#ffffff;font-weight:normal;transform:translate(-50%,-50%) scaleX(0.8940);transform-origin:center center;">۲۴۹۷.۵۸&nbsp; - &nbsp;دارایی خرید و نگهداری</div>
<div class="t" id="lb2" style="left:1358.9px;top:197.5px;font-size:12px;color:#ffffff;font-weight:normal;transform:translate(-50%,-50%) scaleX(0.8508);transform-origin:center center;">۲۱۰۱.۰۸&nbsp; - &nbsp;بیشینه دارایی</div>
<div class="t" id="lb3" style="left:1359.7px;top:219.5px;font-size:12px;color:#ffffff;font-weight:normal;transform:translate(-50%,-50%) scaleX(0.8779);transform-origin:center center;">۱۷۸۶.۳۳&nbsp; - &nbsp;دارایی استراتژی</div>
<div class="t" id="lb4" style="left:1360.3px;top:334.5px;font-size:12px;color:#ffffff;font-weight:normal;transform:translate(-50%,-50%) scaleX(0.8990);transform-origin:center center;">۹۰.۴۵&nbsp; - &nbsp;بیشینه افت</div>
<div class="t" id="dd" style="left:161.0px;top:352.5px;font-size:12px;color:#6a6d73;font-weight:normal;transform:translate(-50%,-50%) scaleX(0.8841);transform-origin:center center;">بیشینه دارایی: %۲۱۰۱.۰۸ | بیشینه افت: %۹۵.۶۹</div>
<div class="t" id="pl" style="left:1392.7px;top:587.4px;font-size:12px;color:#ffffff;font-weight:bold;transform:translate(-50%,-50%) scaleX(0.9667);transform-origin:center center;">۱۰۷۷۷۸.۴۵</div>
<div class="clipb"><div class="t" id="m1" style="left:44.2px;top:99.3px;font-size:12px;color:#ef5350;font-weight:normal;transform:translate(-50%,-50%) scaleX(0.8538);transform-origin:center center;">خروج از خرید@۱۲۹۳۴۰.۲۸</div>
<div class="t" id="m2" style="left:208.7px;top:115.6px;font-size:12px;color:#ef5350;font-weight:normal;transform:translate(-50%,-50%) scaleX(0.8539);transform-origin:center center;">خروج از خرید@۱۱۴۵۵۵</div>
<div class="t" id="m3" style="left:197.5px;top:175.8px;font-size:12px;color:#26a69a;font-weight:normal;transform:translate(-50%,-50%) scaleX(0.8601);transform-origin:center center;">ورود به خرید@۱۱۵۶۶۸.۹۳۶۱۲</div>
<div class="t" id="m4" style="left:387.0px;top:199.9px;font-size:12px;color:#26a69a;font-weight:normal;transform:translate(-50%,-50%) scaleX(0.8671);transform-origin:center center;">ورود به خرید@۱۱۱۳۹۹.۲۸۳۸۶</div>
<div class="t" id="m5" style="left:465.9px;top:138.7px;font-size:12px;color:#ef5350;font-weight:normal;transform:translate(-50%,-50%) scaleX(0.8477);transform-origin:center center;">خروج از خرید@۱۱۰۶۴۹.۴۵</div>
<div class="t" id="m6" style="left:470.5px;top:199.9px;font-size:12px;color:#26a69a;font-weight:normal;transform:translate(-50%,-50%) scaleX(0.9237);transform-origin:center center;">ورود به خرید@۱۱۵۱۵۷.۴۲۴</div>
<div class="t" id="m7" style="left:726.0px;top:109.0px;font-size:12px;color:#ef5350;font-weight:normal;transform:translate(-50%,-50%) scaleX(0.8177);transform-origin:center center;">خروج از خرید@۱۱۵۵۰۰.۰۱</div>
<div class="t" id="m8" style="left:889.0px;top:183.2px;font-size:12px;color:#26a69a;font-weight:normal;transform:translate(-50%,-50%) scaleX(0.8804);transform-origin:center center;">ورود به خرید@۱۱۴۲۷۲.۰۰۷۸۴</div>
<div class="t" id="m9" style="left:1089.2px;top:73.8px;font-size:12px;color:#ef5350;font-weight:normal;transform:translate(-50%,-50%) scaleX(0.8592);transform-origin:center center;">خروج از خرید@۱۲۱۳۱۴.۷۳</div>
<div class="t" id="m10" style="left:1293.0px;top:155.5px;font-size:12px;color:#ef5350;font-weight:normal;transform:translate(-50%,-50%) scaleX(0.8382);transform-origin:center center;">خروج از خرید@۱۰۷۵۳۴.۱۹۶</div>
<div class="t" id="m11" style="left:1312.0px;top:155.5px;font-size:12px;color:#ef5350;font-weight:normal;transform:translate(-50%,-50%) scaleX(0.8462);transform-origin:center center;">خروج از خرید@۱۰۷۷۷۸.۴۵</div>
<div class="t" id="m12" style="left:1303.8px;top:206.5px;font-size:12px;color:#26a69a;font-weight:normal;transform:translate(-50%,-50%) scaleX(0.8584);transform-origin:center center;">ورود به خرید@۱۱۲۰۰۳.۹۹۲۴</div>
<div class="t" id="m13" style="left:1291.6px;top:221.3px;font-size:12px;color:#26a69a;font-weight:normal;transform:translate(-50%,-50%) scaleX(0.9203);transform-origin:center center;">ورود به خرید@۱۰۹۲۷۷.۳۴۸۴۶</div></div>
<div class="clipt"><div class="t" id="xt0" style="left:118.0px;top:12.0px;font-size:11px;color:#666970;font-weight:normal;transform:translate(-50%,-50%) scaleX(0.9080);transform-origin:center center;direction:ltr;unicode-bidi:isolate;">۱۴۰۴/۰۵/۲۶, ۰۴:۰۰</div>
<div class="t" id="xt1" style="left:194.0px;top:12.0px;font-size:11px;color:#666970;font-weight:normal;transform:translate(-50%,-50%) scaleX(0.9080);transform-origin:center center;direction:ltr;unicode-bidi:isolate;">۱۴۰۴/۰۵/۳۰, ۰۴:۰۰</div>
<div class="t" id="xt2" style="left:269.0px;top:12.0px;font-size:11px;color:#666970;font-weight:normal;transform:translate(-50%,-50%) scaleX(0.9080);transform-origin:center center;direction:ltr;unicode-bidi:isolate;">۱۴۰۴/۰۶/۰۳, ۰۴:۰۰</div>
<div class="t" id="xt3" style="left:401.0px;top:12.0px;font-size:11px;color:#666970;font-weight:normal;transform:translate(-50%,-50%) scaleX(0.9080);transform-origin:center center;direction:ltr;unicode-bidi:isolate;">۱۴۰۴/۰۶/۱۰, ۰۴:۰۰</div>
<div class="t" id="xt4" style="left:476.0px;top:12.0px;font-size:11px;color:#666970;font-weight:normal;transform:translate(-50%,-50%) scaleX(0.9080);transform-origin:center center;direction:ltr;unicode-bidi:isolate;">۱۴۰۴/۰۶/۱۴, ۰۴:۰۰</div>
<div class="t" id="xt5" style="left:551.0px;top:12.0px;font-size:11px;color:#666970;font-weight:normal;transform:translate(-50%,-50%) scaleX(0.9080);transform-origin:center center;direction:ltr;unicode-bidi:isolate;">۱۴۰۴/۰۶/۱۸, ۰۴:۰۰</div>
<div class="t" id="xt6" style="left:627.0px;top:12.0px;font-size:11px;color:#666970;font-weight:normal;transform:translate(-50%,-50%) scaleX(0.9080);transform-origin:center center;direction:ltr;unicode-bidi:isolate;">۱۴۰۴/۰۶/۲۲, ۰۴:۰۰</div>
<div class="t" id="xt7" style="left:702.0px;top:12.0px;font-size:11px;color:#666970;font-weight:normal;transform:translate(-50%,-50%) scaleX(0.9080);transform-origin:center center;direction:ltr;unicode-bidi:isolate;">۱۴۰۴/۰۶/۲۶, ۰۴:۰۰</div>
<div class="t" id="xt8" style="left:777.0px;top:12.0px;font-size:11px;color:#666970;font-weight:normal;transform:translate(-50%,-50%) scaleX(0.9080);transform-origin:center center;direction:ltr;unicode-bidi:isolate;">۱۴۰۴/۰۶/۳۰, ۰۴:۰۰</div>
<div class="t" id="xt9" style="left:853.0px;top:12.0px;font-size:11px;color:#666970;font-weight:normal;transform:translate(-50%,-50%) scaleX(0.9080);transform-origin:center center;direction:ltr;unicode-bidi:isolate;">۱۴۰۴/۰۷/۰۳, ۰۴:۰۰</div>
<div class="t" id="xt10" style="left:966.0px;top:12.0px;font-size:11px;color:#666970;font-weight:normal;transform:translate(-50%,-50%) scaleX(0.9080);transform-origin:center center;direction:ltr;unicode-bidi:isolate;">۱۴۰۴/۰۷/۰۹, ۰۴:۰۰</div>
<div class="t" id="xt11" style="left:1041.0px;top:12.0px;font-size:11px;color:#666970;font-weight:normal;transform:translate(-50%,-50%) scaleX(0.9080);transform-origin:center center;direction:ltr;unicode-bidi:isolate;">۱۴۰۴/۰۷/۱۳, ۰۴:۰۰</div>
<div class="t" id="xt12" style="left:1117.0px;top:12.0px;font-size:11px;color:#666970;font-weight:normal;transform:translate(-50%,-50%) scaleX(0.9080);transform-origin:center center;direction:ltr;unicode-bidi:isolate;">۱۴۰۴/۰۷/۱۷, ۰۴:۰۰</div>
<div class="t" id="xt13" style="left:1192.0px;top:12.0px;font-size:11px;color:#666970;font-weight:normal;transform:translate(-50%,-50%) scaleX(0.9080);transform-origin:center center;direction:ltr;unicode-bidi:isolate;">۱۴۰۴/۰۷/۲۱, ۰۴:۰۰</div>
<div class="t" id="xt14" style="left:1267.0px;top:12.0px;font-size:11px;color:#666970;font-weight:normal;transform:translate(-50%,-50%) scaleX(0.9080);transform-origin:center center;direction:ltr;unicode-bidi:isolate;">۱۴۰۴/۰۷/۲۵, ۰۴:۰۰</div>
<div class="t" id="xt15" style="left:1342.0px;top:12.0px;font-size:11px;color:#666970;font-weight:normal;transform:translate(-50%,-50%) scaleX(0.9080);transform-origin:center center;direction:ltr;unicode-bidi:isolate;">۱۴۰۴/۰۷/۲۹, ۰۴:۰۰</div></div>
<svg width="1474" height="764" viewBox="0 0 1474 764" style="pointer-events:none">
<g clip-path="url(#cbot)">
<path d="M50.5,484.9V498.1M55.5,498.3V507.7M56.5,502.6V508.5M57.5,503.7V514.9M58.5,508.3V519.2M74.5,516.2V522.6M76.5,517.1V523.6M77.5,517.6V528.2M79.5,523.1V532.4M82.5,527.0V531.4M84.5,524.3V528.4M87.5,527.1V530.0M88.5,524.8V529.8M89.5,525.9V529.2M92.5,524.4V527.4M93.5,526.1V529.2M95.5,525.4V529.4M96.5,525.1V527.7M98.5,524.2V526.9M100.5,524.7V528.1M101.5,525.4V529.8M109.5,524.7V528.4M111.5,522.6V526.7M112.5,521.4V525.8M113.5,520.9V526.2M119.5,521.8V525.3M121.5,524.5V529.1M122.5,523.7V527.2M124.5,532.4V540.0M133.5,535.5V543.0M140.5,530.0V535.9M141.5,532.9V537.7M143.5,533.0V540.4M146.5,538.7V545.7M151.5,537.1V540.6M153.5,542.4V549.1M154.5,540.3V547.5M156.5,545.2V554.3M157.5,548.2V555.6M160.5,549.1V555.8M169.5,548.7V555.6M175.5,546.2V552.7M176.5,549.0V552.7M178.5,546.8V551.7M180.5,545.4V548.8M185.5,549.0V554.0M186.5,547.9V552.3M189.5,552.1V556.3M191.5,555.1V559.9M193.5,553.8V560.7M196.5,554.6V561.8M197.5,553.5V560.5M213.5,530.0V547.0M216.5,529.2V537.5M217.5,529.7V538.1M220.5,531.5V540.0M221.5,530.4V536.7M223.5,534.4V541.5M224.5,537.9V542.7M225.5,537.0V543.3M228.5,538.8V544.1M232.5,539.5V546.2M233.5,542.5V546.4M234.5,539.7V544.0M239.5,540.0V543.1M240.5,541.2V545.3M241.5,540.1V544.2M247.5,542.1V547.6M249.5,542.5V547.2M250.5,542.0V547.1M255.5,551.2V562.7M260.5,557.6V565.7M261.5,558.5V566.8M264.5,558.8V567.2M265.5,559.5V565.2M268.5,558.7V565.8M269.5,554.9V562.2M273.5,563.8V579.0M274.5,567.9V580.5M279.5,569.8V577.4M282.5,568.7V577.2M285.5,567.5V573.6M289.5,564.8V572.1M290.5,565.6V572.9M292.5,561.7V570.0M293.5,560.7V566.3M295.5,561.3V568.4M296.5,558.9V566.7M303.5,558.6V565.4M306.5,557.3V562.0M315.5,553.2V559.6M317.5,553.1V560.4M319.5,552.7V560.2M320.5,552.5V559.3M322.5,552.9V560.1M323.5,552.4V556.8M324.5,553.6V557.8M325.5,554.8V561.2M327.5,555.2V559.9M328.5,558.4V562.9M330.5,558.9V565.6M331.5,556.1V561.4M333.5,560.9V568.3M335.5,564.4V575.5M336.5,560.2V570.0M339.5,568.4V577.7M343.5,575.5V585.1M344.5,578.0V586.1M349.5,585.2V590.8M351.5,579.8V585.1M352.5,582.1V587.9M357.5,582.4V586.1M362.5,579.3V583.0M363.5,580.3V584.6M364.5,577.8V584.0M367.5,577.0V584.6M368.5,576.7V584.1M375.5,578.6V585.2M376.5,577.1V583.0M378.5,578.9V583.1M380.5,580.2V584.5M381.5,577.7V581.9M395.5,574.5V588.2M396.5,578.3V586.4M399.5,574.7V583.1M404.5,578.5V587.6M408.5,572.6V578.9M412.5,568.2V577.6M416.5,569.9V577.4M418.5,565.3V572.3M419.5,564.0V571.7M421.5,565.9V571.9M423.5,565.8V570.7M427.5,563.1V569.7M428.5,566.2V570.2M432.5,564.4V569.3M437.5,561.3V567.2M442.5,559.1V562.2M444.5,561.6V568.0M447.5,563.9V570.7M450.5,564.5V571.7M452.5,569.4V578.1M455.5,567.5V576.8M456.5,567.3V573.3M463.5,562.5V570.1M464.5,562.1V568.0M467.5,561.2V566.7M469.5,555.4V563.4M472.5,553.6V571.9M475.5,560.7V573.0M477.5,565.1V573.2M480.5,567.0V571.1M483.5,565.3V568.8M485.5,568.0V570.8M487.5,565.8V570.1M490.5,566.0V571.0M491.5,567.9V572.0M493.5,567.1V572.0M498.5,569.7V573.2M499.5,568.3V571.3M501.5,568.0V572.1M503.5,566.3V569.6M507.5,564.3V569.4M508.5,562.5V567.9M520.5,563.1V566.6M522.5,561.5V568.9M525.5,562.5V567.0M530.5,553.3V559.7M532.5,556.6V564.3M533.5,555.5V563.2M535.5,558.9V564.9M538.5,556.0V565.4M539.5,555.6V561.4M540.5,553.8V564.4M543.5,554.4V565.6M546.5,555.0V566.0M547.5,559.1V570.3M548.5,556.0V566.3M552.5,561.2V566.7M556.5,559.3V562.7M560.5,557.6V561.6M562.5,556.6V561.7M564.5,549.5V559.4M570.5,549.6V554.3M573.5,547.4V552.2M576.5,548.2V552.5M582.5,545.7V549.8M584.5,545.5V548.5M587.5,544.4V548.8M591.5,541.1V547.0M594.5,535.0V541.7M597.5,538.9V544.2M598.5,537.5V542.5M599.5,538.8V543.0M602.5,538.5V541.8M603.5,536.5V541.4M608.5,532.5V536.6M610.5,532.5V538.9M615.5,535.1V540.9M616.5,534.3V538.4M619.5,535.0V541.4M621.5,535.0V541.4M623.5,536.0V543.5M624.5,535.4V540.3M626.5,536.0V542.7M630.5,537.0V541.2M632.5,535.2V539.1M634.5,535.5V539.2M638.5,537.4V542.2M639.5,537.3V540.6M640.5,537.4V541.8M646.5,535.5V543.2M653.5,531.5V539.9M654.5,532.0V543.1M655.5,532.6V539.9M658.5,536.5V544.8M662.5,538.3V544.6M663.5,539.2V543.2M666.5,540.0V544.9M667.5,538.3V544.4M669.5,537.5V543.6M672.5,536.9V543.5M674.5,538.0V542.9M675.5,535.8V542.7M678.5,536.8V544.7M679.5,536.9V543.7M683.5,532.0V537.7M686.5,530.9V536.9M687.5,529.1V534.2M690.5,528.7V534.4M691.5,530.4V536.8M694.5,531.8V537.4M695.5,534.3V538.6M698.5,535.1V542.9M699.5,532.0V538.9M704.5,529.4V541.7M709.5,528.9V535.3M710.5,525.0V534.6M717.5,524.9V529.5M718.5,526.4V530.3M719.5,525.1V529.3M722.5,525.0V531.1M727.5,527.5V533.4M728.5,527.8V535.6M730.5,529.2V532.7M733.5,531.8V535.3M734.5,532.7V537.2M735.5,534.6V539.4M738.5,536.0V542.7M741.5,539.1V542.1M746.5,538.2V541.1M749.5,538.7V541.4M750.5,537.1V539.8M751.5,536.9V538.9M755.5,537.3V540.3M759.5,537.7V540.9M760.5,536.1V540.0M762.5,536.5V540.3M765.5,537.1V539.1M773.5,537.8V540.7M778.5,540.5V543.4M779.5,538.3V542.8M782.5,540.1V547.4M783.5,541.8V547.8M784.5,543.7V552.1M786.5,551.5V559.5M787.5,548.8V559.1M791.5,552.9V561.8M792.5,551.7V560.6M794.5,552.5V559.5M795.5,556.3V561.4M797.5,552.9V561.2M798.5,553.3V562.2M799.5,554.2V563.4M800.5,553.4V559.6M802.5,556.1V563.6M803.5,554.8V562.1M806.5,556.1V561.3M811.5,553.5V558.1M813.5,557.3V562.1M815.5,558.0V564.9M819.5,561.3V567.1M822.5,557.5V568.4M827.5,553.2V559.0M830.5,553.3V557.8M831.5,549.5V556.8M834.5,549.5V555.4M837.5,550.8V557.2M838.5,554.1V558.6M840.5,555.1V561.8M845.5,561.7V566.9M846.5,559.7V565.4M849.5,562.1V569.2M850.5,571.1V578.9M853.5,576.9V582.6M854.5,573.5V580.1M856.5,573.6V580.3M858.5,575.3V582.3M859.5,573.9V581.1M862.5,573.4V578.1M864.5,574.7V581.0M866.5,575.8V581.8M867.5,573.3V579.5M869.5,572.6V578.6M872.5,573.8V578.1M877.5,574.9V578.5M881.5,576.3V580.8M882.5,574.9V579.1M885.5,575.4V579.6M890.5,576.5V580.3M894.5,577.0V581.0M896.5,574.8V580.4M897.5,574.6V580.1M899.5,575.1V578.3M901.5,574.5V577.8M905.5,572.4V576.4M906.5,571.0V575.7M907.5,573.3V576.1M912.5,561.6V568.6M915.5,561.6V567.0M918.5,560.7V563.3M921.5,558.3V563.3M923.5,556.2V561.7M926.5,546.4V551.6M929.5,546.8V551.7M933.5,544.4V549.6M936.5,547.3V554.3M937.5,546.5V552.8M938.5,551.7V556.7M939.5,549.5V555.5M941.5,550.3V554.9M942.5,550.5V556.6M946.5,547.8V556.4M949.5,543.7V552.8M954.5,538.9V544.8M958.5,531.2V542.9M961.5,526.9V536.4M962.5,522.3V534.5M963.5,525.4V537.2M970.5,515.9V525.2M974.5,517.9V525.6M976.5,515.8V520.9M982.5,510.0V519.9M985.5,506.8V514.0M986.5,508.7V513.0M987.5,506.9V513.0M992.5,508.7V513.8M993.5,508.8V516.1M994.5,509.6V515.8M995.5,511.4V518.5M998.5,502.6V511.8M1001.5,493.8V506.9M1002.5,489.3V500.6M1003.5,492.4V501.6M1005.5,492.8V500.2M1008.5,494.2V501.8M1009.5,496.8V502.0M1010.5,495.4V501.3M1013.5,495.2V499.8M1016.5,498.4V502.5M1018.5,496.1V503.2M1022.5,496.1V502.2M1030.5,482.1V492.8M1032.5,485.7V494.8M1034.5,487.6V495.9M1035.5,483.9V493.0M1038.5,489.6V498.1M1040.5,493.4V498.4M1042.5,487.8V494.7M1046.5,487.9V495.5M1048.5,484.1V492.2M1051.5,484.9V492.2M1056.5,478.1V486.4M1058.5,473.1V480.0M1059.5,476.2V484.7M1061.5,476.8V485.0M1062.5,477.0V486.1M1064.5,483.3V488.4M1065.5,479.7V485.1M1066.5,480.1V488.1M1070.5,482.7V489.4M1072.5,482.0V502.6M1073.5,488.7V502.9M1074.5,491.4V508.5M1082.5,498.0V505.7M1085.5,498.0V505.8M1086.5,497.6V502.4M1089.5,494.0V503.1M1091.5,497.2V503.3M1098.5,486.1V492.6M1101.5,489.2V495.0M1107.5,492.3V500.9M1109.5,489.5V502.5M1117.5,501.1V508.7M1120.5,500.3V507.9M1121.5,500.0V504.9M1124.5,502.7V507.3M1125.5,498.3V504.2M1126.5,501.5V507.3M1128.5,501.8V513.8M1129.5,498.5V511.3M1131.5,505.4V519.8M1132.5,511.5V524.4M1136.5,528.9V623.1M1137.5,530V545M1139.5,546.4V568.0M1147.5,560.4V570.9M1149.5,556.8V567.8M1150.5,557.8V568.3M1152.5,563.5V570.5M1153.5,559.9V566.6M1157.5,561.1V570.2M1158.5,567.2V575.1M1161.5,563.1V573.0M1164.5,559.1V564.9M1169.5,551.7V564.7M1171.5,544.0V555.3M1173.5,543.6V550.0M1174.5,539.2V545.5M1176.5,541.7V547.9M1179.5,538.7V547.8M1181.5,538.7V547.1M1188.5,537.9V549.3M1189.5,540.8V548.4M1192.5,539.9V545.6M1198.5,543.0V555.1M1205.5,560.1V567.6M1209.5,553.4V559.6M1211.5,552.7V558.3M1216.5,551.1V558.8M1217.5,554.7V562.2M1219.5,550.9V559.9M1221.5,553.7V560.6M1222.5,555.8V565.6M1224.5,562.6V572.2M1229.5,562.3V568.2M1237.5,566.6V575.6M1238.5,562.2V572.4M1240.5,563.9V577.9M1241.5,560.2V572.0M1243.5,568.0V578.5M1244.5,561.8V574.1M1245.5,567.3V582.1M1246.5,573.2V583.2M1249.5,577.9V585.7M1251.5,577.7V587.2M1253.5,581.4V586.7M1254.5,578.1V586.1M1257.5,586.8V602.8M1265.5,589.5V598.1M1267.5,590.0V598.3M1268.5,588.4V595.5M1270.5,587.7V595.1M1272.5,589.4V596.6M1273.5,592.8V597.0M1276.5,588.8V593.3M1277.5,590.2V595.3M1278.5,588.5V595.1M1280.5,591.6V595.0M1284.5,590.9V595.4M1285.5,590.8V595.0M1288.5,589.4V594.3M1304.5,577.4V584.3M1305.5,576.4V582.3M1307.5,576.8V586.5M1309.5,572.8V579.6M1312.5,563.3V572.1M1316.5,564.3V570.8M1318.5,563.1V571.3M1320.5,564.8V570.3M1323.5,565.1V570.1M1332.5,580.7V590.8M1337.5,574.2V586.3M1339.5,564.2V576.4M1341.5,560.3V572.0M1344.5,568.4V584.8M1345.5,567.8V584.2M1347.5,577.6V587.2M1348.5,577.2V586.9M1349.5,582.6V588.1M1350.5,584.4V588.9M1353.5,588.4V593.8M1356.5,578.6V587.6" stroke="#ef5350" stroke-width="1" fill="none"/>
<path d="M39.5,497.7V504.8M40.5,500.5V510.0M41.5,501.8V509.7M42.5,495.8V507.4M44.5,494.6V502.3M45.5,498.7V505.7M47.5,487.6V500.8M48.5,490.5V503.0M49.5,491.5V501.7M52.5,496.2V504.4M53.5,492.7V499.3M60.5,516.4V526.0M61.5,521.6V529.6M63.5,523.2V528.4M64.5,519.9V525.9M65.5,519.8V523.7M66.5,521.1V527.0M68.5,519.8V523.9M69.5,517.6V523.6M71.5,516.4V520.8M72.5,516.9V523.3M73.5,515.7V521.4M81.5,524.7V530.0M85.5,525.8V530.6M90.5,525.0V528.9M97.5,524.3V528.6M103.5,525.8V530.0M104.5,527.9V531.0M105.5,525.4V527.7M106.5,526.9V529.6M108.5,523.4V526.4M114.5,520.2V526.0M116.5,522.8V526.5M117.5,521.2V524.3M120.5,524.1V527.3M127.5,537.2V545.8M128.5,531.3V542.0M129.5,535.7V544.0M130.5,537.5V545.3M132.5,537.0V545.5M135.5,534.0V538.3M136.5,534.7V541.5M137.5,532.8V538.5M138.5,532.8V536.5M144.5,534.6V543.1M145.5,535.7V545.1M148.5,537.5V545.6M152.5,538.3V542.6M159.5,552.3V557.8M161.5,550.2V555.4M162.5,551.6V558.8M164.5,552.6V558.1M165.5,549.8V557.3M167.5,550.4V556.7M170.5,549.0V557.0M172.5,549.9V554.3M173.5,547.8V553.3M177.5,545.1V549.4M181.5,547.5V550.6M183.5,545.7V550.5M184.5,548.3V552.6M188.5,549.1V554.0M192.5,551.8V558.5M194.5,553.7V558.4M199.5,552.6V560.6M200.5,556.4V561.0M201.5,555.0V559.1M202.5,552.2V557.8M204.5,553.1V560.7M205.5,552.7V560.5M207.5,557.3V563.6M208.5,553.4V563.4M209.5,544.5V558.5M210.5,534.6V551.9M212.5,535.6V547.4M215.5,527.9V535.9M218.5,528.8V535.6M226.5,536.3V541.7M229.5,539.4V545.6M231.5,539.3V543.5M236.5,540.3V544.8M237.5,539.4V543.1M242.5,540.2V544.7M244.5,541.9V546.8M245.5,543.3V546.9M248.5,542.1V547.7M252.5,546.6V564.5M253.5,547.3V566.4M256.5,556.6V563.3M257.5,554.8V563.4M258.5,551.1V561.3M263.5,559.9V569.6M266.5,560.8V569.5M271.5,565.2V579.4M272.5,560.0V572.9M276.5,568.1V576.9M280.5,569.1V575.0M281.5,568.0V575.0M284.5,568.8V577.3M287.5,565.3V574.8M288.5,569.6V575.0M297.5,560.9V566.3M298.5,563.6V570.5M300.5,559.6V564.7M301.5,561.2V567.9M304.5,558.4V563.9M308.5,558.1V565.7M309.5,557.6V564.8M311.5,558.9V566.5M312.5,560.3V568.7M314.5,555.8V563.9M316.5,554.6V561.9M332.5,558.6V564.1M338.5,564.0V576.4M340.5,567.3V575.7M341.5,567.5V580.2M346.5,583.2V588.0M347.5,579.7V587.0M348.5,580.9V589.3M354.5,580.4V586.9M355.5,580.3V584.0M356.5,579.9V585.6M359.5,581.7V585.1M360.5,579.7V584.7M365.5,579.6V584.5M370.5,577.2V583.0M371.5,579.9V584.8M372.5,577.0V584.3M373.5,578.9V585.4M379.5,581.2V584.8M383.5,578.0V584.6M384.5,578.8V584.9M386.5,579.1V586.1M387.5,579.8V588.0M388.5,584.2V591.1M389.5,580.4V591.0M391.5,580.6V590.0M392.5,575.5V586.1M394.5,577.3V588.8M397.5,574.7V585.6M400.5,575.8V584.8M402.5,577.6V587.2M405.5,575.3V582.6M407.5,569.9V575.7M410.5,567.6V574.6M411.5,570.0V580.3M413.5,573.4V582.7M415.5,564.1V572.8M420.5,565.1V569.7M424.5,562.9V567.4M426.5,562.3V568.6M429.5,563.5V567.7M431.5,562.0V567.7M434.5,560.0V565.5M435.5,560.5V567.2M436.5,557.7V565.8M439.5,559.5V564.5M443.5,560.8V563.5M445.5,560.6V567.4M448.5,565.3V573.6M451.5,566.2V577.0M453.5,566.0V576.0M458.5,567.0V572.2M459.5,568.4V574.6M460.5,566.8V573.2M461.5,564.6V572.4M466.5,557.6V563.0M468.5,558.9V564.6M471.5,553.5V569.5M474.5,560.4V570.1M476.5,563.2V571.5M479.5,564.5V570.3M482.5,566.8V570.2M484.5,566.1V570.4M488.5,567.8V570.8M492.5,567.7V572.5M495.5,569.6V572.8M496.5,571.2V574.7M500.5,569.0V572.3M504.5,566.4V571.3M506.5,564.5V569.6M509.5,563.6V568.8M511.5,565.3V568.5M512.5,563.0V568.3M514.5,566.0V569.6M515.5,563.3V568.9M516.5,563.1V567.9M517.5,563.6V569.4M519.5,565.4V568.4M523.5,560.1V566.7M524.5,559.7V564.2M527.5,555.9V561.6M536.5,557.4V562.1M541.5,553.5V560.5M544.5,554.3V563.0M549.5,560.7V570.8M551.5,561.3V568.1M554.5,560.7V566.7M555.5,561.3V567.6M557.5,559.6V565.3M559.5,559.3V564.1M563.5,552.8V559.3M565.5,553.6V560.3M567.5,546.8V554.9M568.5,547.1V557.1M571.5,546.5V553.6M574.5,546.8V551.3M575.5,546.8V552.4M578.5,546.4V549.8M579.5,546.9V551.4M581.5,547.1V551.1M583.5,546.4V550.9M586.5,544.6V551.4M589.5,542.7V550.5M590.5,545.4V550.6M592.5,538.2V546.0M600.5,539.9V544.2M605.5,535.9V539.9M607.5,535.0V538.3M611.5,534.0V539.0M613.5,536.5V540.3M614.5,534.3V540.2M618.5,534.9V540.4M622.5,535.6V542.5M627.5,536.0V539.9M629.5,536.2V540.3M631.5,535.3V541.1M635.5,537.6V540.3M637.5,536.9V540.4M642.5,537.0V542.3M643.5,538.0V543.3M645.5,535.0V542.5M647.5,534.1V545.6M648.5,533.3V542.6M650.5,534.0V544.4M651.5,533.3V543.8M656.5,532.9V543.3M659.5,539.9V545.3M661.5,539.1V545.6M664.5,539.3V546.3M670.5,537.4V541.6M671.5,537.2V544.4M677.5,537.2V545.0M680.5,537.8V545.4M682.5,533.0V540.6M685.5,534.0V539.5M688.5,530.2V537.6M693.5,529.9V537.3M696.5,531.1V537.4M701.5,531.1V543.4M702.5,533.0V544.5M703.5,533.6V542.8M706.5,526.5V537.4M711.5,528.4V533.9M712.5,525.2V532.6M714.5,527.4V531.4M715.5,526.4V529.9M720.5,524.8V527.3M723.5,526.4V532.6M725.5,527.2V533.9M726.5,528.2V535.7M731.5,531.4V535.1M736.5,532.9V539.0M739.5,534.6V539.5M742.5,536.9V540.0M743.5,536.3V539.7M744.5,538.4V542.0M747.5,536.5V540.5M752.5,537.4V540.4M754.5,536.7V539.3M757.5,536.5V540.2M758.5,537.0V540.8M763.5,537.7V540.4M767.5,537.3V539.3M768.5,538.7V540.8M770.5,538.5V541.2M771.5,537.7V540.7M774.5,539.2V541.9M775.5,538.1V542.0M776.5,537.6V540.3M781.5,542.3V547.8M789.5,552.1V562.1M790.5,551.6V561.0M805.5,552.7V559.0M807.5,552.3V556.7M808.5,553.5V558.9M810.5,556.4V561.0M814.5,555.1V559.5M818.5,558.4V563.8M821.5,557.4V568.3M823.5,556.4V562.1M824.5,560.9V566.6M826.5,556.4V562.6M829.5,551.1V557.5M832.5,549.5V554.7M841.5,555.0V561.5M842.5,559.2V564.7M848.5,565.1V571.4M851.5,572.0V579.6M861.5,574.1V581.5M865.5,573.2V578.2M870.5,575.1V580.9M873.5,575.9V581.5M874.5,577.1V581.8M875.5,574.2V580.2M878.5,575.5V581.0M880.5,575.0V580.0M886.5,576.4V580.7M888.5,575.5V579.3M889.5,576.3V580.4M891.5,575.8V578.4M893.5,575.6V580.5M898.5,575.5V579.9M902.5,575.8V579.0M904.5,573.0V578.3M909.5,565.4V572.8M910.5,563.6V571.7M913.5,560.4V566.0M914.5,561.3V564.7M917.5,562.2V564.4M920.5,558.5V565.7M922.5,554.0V558.6M925.5,549.2V553.9M928.5,545.5V549.3M930.5,547.4V551.3M931.5,544.9V549.1M934.5,547.1V552.4M944.5,551.4V556.8M945.5,547.2V553.9M947.5,544.4V552.1M950.5,543.1V551.7M952.5,545.6V549.7M953.5,543.4V549.2M955.5,542.2V547.8M957.5,536.9V547.3M960.5,530.5V540.4M965.5,521.3V531.1M966.5,518.9V529.5M968.5,515.3V527.4M969.5,517.3V527.7M971.5,515.0V525.2M973.5,516.4V522.5M978.5,513.5V522.4M981.5,513.4V520.4M984.5,506.7V512.6M989.5,510.2V515.0M990.5,507.4V513.5M997.5,507.2V514.8M1000.5,491.9V505.3M1006.5,496.5V502.8M1011.5,498.2V502.3M1014.5,496.8V501.6M1017.5,495.7V502.2M1019.5,495.9V500.8M1021.5,497.2V502.8M1024.5,495.2V501.9M1025.5,493.6V498.4M1026.5,490.0V497.1M1027.5,492.6V500.2M1029.5,479.0V486.7M1033.5,479.8V489.6M1037.5,487.5V495.8M1041.5,489.9V498.2M1043.5,489.5V498.1M1045.5,486.0V494.6M1049.5,488.0V494.6M1050.5,488.5V493.2M1053.5,482.0V487.5M1054.5,484.2V490.5M1057.5,476.7V482.4M1067.5,483.3V489.7M1069.5,485.8V493.0M1075.5,480.8V496.0M1077.5,492.9V504.8M1078.5,494.9V507.9M1080.5,498.1V505.8M1081.5,498.9V507.2M1083.5,498.4V506.3M1088.5,497.7V504.4M1090.5,492.7V499.4M1093.5,491.6V500.2M1094.5,488.1V500.1M1096.5,486.4V496.6M1097.5,485.2V491.6M1099.5,490.2V497.0M1102.5,492.3V496.5M1104.5,494.6V502.8M1108.5,493.8V505.3M1110.5,494.4V505.4M1112.5,496.2V511.5M1113.5,501.0V511.7M1115.5,501.3V513.4M1116.5,500.8V511.9M1118.5,502.2V510.0M1123.5,499.2V504.1M1133.5,526.9V553.4M1134.5,519.8V543.7M1140.5,545.3V566.6M1141.5,554.8V569.4M1142.5,551.0V568.8M1144.5,556.3V572.7M1145.5,559.9V572.8M1148.5,557.4V566.2M1155.5,559.4V571.9M1160.5,559.4V566.9M1163.5,559.7V568.5M1165.5,561.4V566.7M1166.5,557.9V564.4M1168.5,551.6V559.4M1172.5,547.1V557.4M1177.5,538.5V544.0M1180.5,537.9V546.2M1182.5,537.7V546.7M1184.5,538.1V545.2M1185.5,538.8V550.8M1187.5,536.9V546.2M1193.5,536.1V545.0M1195.5,538.6V546.3M1196.5,542.5V550.9M1197.5,542.2V554.9M1200.5,551.9V565.9M1201.5,551.3V560.4M1203.5,556.7V571.1M1204.5,560.4V571.5M1206.5,563.4V572.8M1208.5,554.3V563.5M1212.5,555.9V562.6M1213.5,551.4V560.3M1214.5,552.6V561.9M1220.5,552.0V562.7M1225.5,560.1V568.8M1227.5,562.0V572.2M1228.5,566.2V572.3M1232.5,564.3V570.2M1233.5,562.5V567.3M1235.5,561.4V573.2M1236.5,562.1V573.3M1248.5,580.9V588.5M1252.5,576.4V586.3M1256.5,582.6V598.7M1259.5,593.2V613.5M1260.5,593.0V607.3M1261.5,592.5V607.1M1262.5,599.4V608.5M1264.5,590.0V600.2M1269.5,588.1V597.6M1275.5,590.6V595.9M1281.5,589.1V594.8M1283.5,590.3V593.7M1286.5,590.3V593.4M1289.5,591.2V595.0M1291.5,591.1V595.2M1292.5,592.5V595.7M1293.5,591.4V597.4M1294.5,590.0V594.6M1296.5,583.2V591.8M1299.5,580.9V590.0M1301.5,580.8V587.0M1302.5,576.8V583.1M1308.5,580.4V588.7M1310.5,574.6V584.8M1313.5,565.0V574.8M1315.5,563.4V569.2M1317.5,562.2V567.8M1321.5,568.7V574.2M1324.5,567.8V571.2M1325.5,571.1V577.0M1328.5,579.0V585.9M1329.5,573.4V585.7M1331.5,580.6V589.3M1333.5,585.0V589.0M1334.5,582.4V588.8M1336.5,570.6V584.8M1340.5,555.4V576.0M1342.5,563.9V572.0M1352.5,584.1V593.5M1355.5,579.2V590.4" stroke="#26a69a" stroke-width="1" fill="none"/>
<path d="M78.95,506 H87.45 V515 H92.7 L83.2,524.5 L73.7,515 H78.95 Z" fill="#ef5350"/>
<path d="M243.15,521.2 H251.65 V530.2 H256.9 L247.4,539.7 L237.9,530.2 H243.15 Z" fill="#ef5350"/>
<path d="M232.35,564 H240.85 V555 H246.1 L236.6,545.5 L227.1,555 H232.35 Z" fill="#26a69a"/>
<path d="M421.75,589.5 H430.25 V580.5 H435.5 L426,571.0 L416.5,580.5 H421.75 Z" fill="#26a69a"/>
<path d="M500.25,545.4 H508.75 V554.4 H514.0 L504.5,563.9 L495.0,554.4 H500.25 Z" fill="#ef5350"/>
<path d="M504.75,589 H513.25 V580 H518.5 L509,570.5 L499.5,580 H504.75 Z" fill="#26a69a"/>
<path d="M760.75,516 H769.25 V525 H774.5 L765,534.5 L755.5,525 H760.75 Z" fill="#ef5350"/>
<path d="M923.75,572.5 H932.25 V563.5 H937.5 L928,554.0 L918.5,563.5 H923.75 Z" fill="#26a69a"/>
<path d="M1123.75,479.6 H1132.25 V488.6 H1137.5 L1128,498.1 L1118.5,488.6 H1123.75 Z" fill="#ef5350"/>
<path d="M1327.75,562 H1336.25 V571 H1341.5 L1332,580.5 L1322.5,571 H1327.75 Z" fill="#ef5350"/>
<path d="M1346.65,561.5 H1355.15 V570.5 H1360.4 L1350.9,580.0 L1341.4,570.5 H1346.65 Z" fill="#ef5350"/>
<path d="M1326.35,610.6 H1334.85 V601.6 H1340.1 L1330.6,592.1 L1321.1,601.6 H1326.35 Z" fill="#26a69a"/>
<path d="M1338.55,594.8 H1347.05 V585.8 H1352.3 L1342.8,576.3 L1333.3,585.8 H1338.55 Z" fill="#26a69a"/>
</g>
</svg>
</body></html>
